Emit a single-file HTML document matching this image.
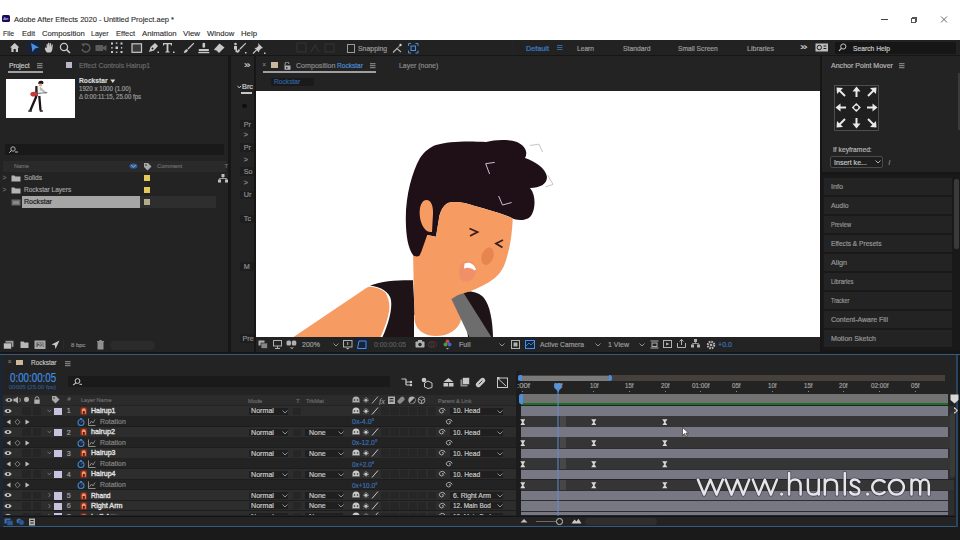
<!DOCTYPE html>
<html><head><meta charset="utf-8">
<style>
*{margin:0;padding:0;box-sizing:border-box}
html,body{width:960px;height:540px;overflow:hidden;background:#161616;font-family:"Liberation Sans",sans-serif;position:relative}
.a{position:absolute}
.t{position:absolute;white-space:nowrap;line-height:1;transform-origin:0 0;-webkit-text-stroke:0.2px currentColor}
</style></head><body>
<div class="a" style="left:0px;top:0px;width:960px;height:39.6px;background:#ffffff;"></div>
<div class="a" style="left:2px;top:15.3px;width:8px;height:7.2px;background:#1b0e4f;border-radius:1.5px;"></div>
<div class="t" style="left:3.3px;top:16.90px;font-size:4.2px;color:#a9a0ff;">Ae</div>
<div class="t" style="left:14px;top:16.05px;font-size:7.3px;color:#2a2a2a;transform:scaleX(1.028);-webkit-text-stroke:0.1px #2a2a2a;">Adobe After Effects 2020 - Untitled Project.aep *</div>
<div class="t" style="left:3.4px;top:30.05px;font-size:7.3px;color:#2a2a2a;transform:scaleX(0.952);-webkit-text-stroke:0.1px #2a2a2a;">File</div>
<div class="t" style="left:22px;top:30.05px;font-size:7.3px;color:#2a2a2a;transform:scaleX(1.033);-webkit-text-stroke:0.1px #2a2a2a;">Edit</div>
<div class="t" style="left:41.6px;top:30.05px;font-size:7.3px;color:#2a2a2a;transform:scaleX(1.055);-webkit-text-stroke:0.1px #2a2a2a;">Composition</div>
<div class="t" style="left:91.4px;top:30.05px;font-size:7.3px;color:#2a2a2a;transform:scaleX(0.964);-webkit-text-stroke:0.1px #2a2a2a;">Layer</div>
<div class="t" style="left:116px;top:30.05px;font-size:7.3px;color:#2a2a2a;transform:scaleX(1.025);-webkit-text-stroke:0.1px #2a2a2a;">Effect</div>
<div class="t" style="left:142px;top:30.05px;font-size:7.3px;color:#2a2a2a;transform:scaleX(1.066);-webkit-text-stroke:0.1px #2a2a2a;">Animation</div>
<div class="t" style="left:183px;top:30.05px;font-size:7.3px;color:#2a2a2a;transform:scaleX(1.083);-webkit-text-stroke:0.1px #2a2a2a;">View</div>
<div class="t" style="left:206.7px;top:30.05px;font-size:7.3px;color:#2a2a2a;transform:scaleX(1.051);-webkit-text-stroke:0.1px #2a2a2a;">Window</div>
<div class="t" style="left:241px;top:30.05px;font-size:7.3px;color:#2a2a2a;transform:scaleX(1.066);-webkit-text-stroke:0.1px #2a2a2a;">Help</div>
<div class="a" style="left:881.4px;top:19px;width:6.6px;height:1px;background:#444;"></div>
<div class="a" style="left:911px;top:18.2px;width:5px;height:4.6px;border:1px solid #555;"></div>
<div class="a" style="left:912.3px;top:17px;width:5px;height:4.6px;border-top:1px solid #555;border-right:1px solid #555;"></div>
<svg class="a" style="left:940px;top:16px;" width="8" height="7" viewBox="0 0 8 7"><path d="M1 0.5 L7 6.5 M7 0.5 L1 6.5" stroke="#555" stroke-width="0.9"/></svg>
<div class="a" style="left:0px;top:39.6px;width:960px;height:15.6px;background:#222222;"></div>
<svg class="a" style="left:9px;top:42px;" width="12" height="11" viewBox="0 0 12 11"><path d="M1 5.5 L5.7 1 L10.4 5.5 L9 5.5 L9 10 L6.8 10 L6.8 7 L4.6 7 L4.6 10 L2.4 10 L2.4 5.5 Z" fill="#c8c8c8"/></svg>
<div class="a" style="left:27px;top:41px;width:13px;height:13px;background:#16233a;"></div>
<svg class="a" style="left:29px;top:42px;" width="11" height="11" viewBox="0 0 11 11"><path d="M2 1 L10 5.5 L6 6.5 L3.5 10 Z" fill="#4a8fe0"/></svg>
<svg class="a" style="left:44px;top:42px;" width="12" height="12" viewBox="0 0 12 12"><path d="M3 10.5 C1.5 9 1 7.5 0.8 6 C1.2 5.3 2 5.5 2.6 6.3 L2.6 2.3 C2.8 1.5 3.6 1.5 3.8 2.3 L3.9 5 L4.1 1.2 C4.3 0.4 5.2 0.4 5.4 1.2 L5.5 5 L5.9 1.6 C6.1 0.9 7 0.9 7.1 1.7 L7 5.3 L7.7 2.8 C8 2.1 8.9 2.3 8.8 3.1 L8.3 7.5 C8 9 7.2 10 6.5 10.5 Z" fill="#c8c8c8"/></svg>
<svg class="a" style="left:59px;top:42px;" width="13" height="12" viewBox="0 0 13 12"><circle cx="5" cy="5" r="3.6" stroke="#c8c8c8" stroke-width="1.3" fill="none"/><path d="M7.6 7.6 L11 11" stroke="#c8c8c8" stroke-width="1.6"/></svg>
<svg class="a" style="left:80px;top:42px;" width="12" height="12" viewBox="0 0 12 12"><path d="M3 3.2 A4 4 0 1 1 2 7" stroke="#5c5c5c" stroke-width="1.4" fill="none"/><path d="M1 1.5 L4.5 1.8 L3.5 5 Z" fill="#5c5c5c"/></svg>
<svg class="a" style="left:95px;top:43px;" width="12" height="10" viewBox="0 0 12 10"><rect x="0.5" y="2" width="7.5" height="6" fill="#5c5c5c"/><path d="M8 4 L11.5 2 L11.5 8 L8 6 Z" fill="#5c5c5c"/></svg>
<svg class="a" style="left:111px;top:42px;" width="12" height="12" viewBox="0 0 12 12"><g fill="#c8c8c8"><rect x="0" y="0.5" width="2" height="2"/><rect x="9.5" y="0.5" width="2" height="2"/><rect x="0" y="9" width="2" height="2"/><rect x="9.5" y="9" width="2" height="2"/><rect x="4.5" y="4.5" width="2.5" height="2.5"/><rect x="4.8" y="0.5" width="1.6" height="1.3"/><rect x="4.8" y="9.6" width="1.6" height="1.3"/><rect x="0.3" y="5" width="1.3" height="1.6"/><rect x="9.9" y="5" width="1.3" height="1.6"/></g></svg>
<svg class="a" style="left:131px;top:43px;" width="12" height="10" viewBox="0 0 12 10"><rect x="1" y="0.8" width="9.5" height="8.5" stroke="#c8c8c8" stroke-width="1.2" fill="#3a3a3a"/></svg>
<svg class="a" style="left:147px;top:42px;" width="13" height="12" viewBox="0 0 13 12"><path d="M2 10 L3.5 5 L8 1 L11 4 L7 8.5 Z" fill="#c8c8c8"/><circle cx="5.5" cy="6.5" r="1" fill="#1f1f1f"/><rect x="10.5" y="9.5" width="1.5" height="1.5" fill="#c8c8c8"/></svg>
<svg class="a" style="left:162px;top:42px;" width="13" height="12" viewBox="0 0 13 12"><path d="M1 1 L10 1 L10 3.5 L9 3.5 L8.6 2.3 L6.4 2.3 L6.4 9.3 L7.6 9.7 L7.6 10.4 L3.4 10.4 L3.4 9.7 L4.6 9.3 L4.6 2.3 L2.4 2.3 L2 3.5 L1 3.5 Z" fill="#c8c8c8"/><rect x="11" y="9.5" width="1.5" height="1.5" fill="#c8c8c8"/></svg>
<svg class="a" style="left:183px;top:42px;" width="12" height="12" viewBox="0 0 12 12"><path d="M10.5 0.8 L11.3 1.6 L5.5 7.5 L4.5 6.5 Z" fill="#c8c8c8"/><path d="M4 7 L5 8 C4.5 10 3 11 0.8 11 C1.2 10 1.2 8 4 7 Z" fill="#c8c8c8"/></svg>
<svg class="a" style="left:198px;top:42px;" width="12" height="12" viewBox="0 0 12 12"><rect x="4.5" y="0.8" width="2.6" height="5" rx="1.2" fill="#c8c8c8"/><path d="M0.8 7 L10.8 7 L10.8 9.2 L0.8 9.2 Z" fill="#c8c8c8"/><rect x="0.3" y="10" width="11" height="1.2" fill="#c8c8c8"/></svg>
<svg class="a" style="left:213px;top:42px;" width="13" height="12" viewBox="0 0 13 12"><path d="M1 7.5 L6.5 1.5 L11.5 5.5 L6 11 Z" fill="#c8c8c8"/><path d="M2.5 8 L5 10.5" stroke="#1f1f1f" stroke-width="1"/></svg>
<svg class="a" style="left:233px;top:42px;" width="14" height="12" viewBox="0 0 14 12"><circle cx="2.5" cy="2" r="1.3" fill="#c8c8c8"/><path d="M1 4 L4 4 L4 10 L2.5 10 L2.3 7 L1 8 Z" fill="#c8c8c8"/><path d="M12.5 0.8 L13.2 1.6 L7.5 7.5 L6.5 6.5 Z" fill="#c8c8c8"/><path d="M6 7 L7 8 C6.5 10 5 11 3.5 11 C4 10 4 8 6 7 Z" fill="#c8c8c8"/><rect x="12" y="10" width="1.5" height="1.5" fill="#c8c8c8"/></svg>
<svg class="a" style="left:252px;top:42px;" width="14" height="13" viewBox="0 0 14 13"><path d="M6 1 L11 6 L9.3 6.5 L7.3 8.5 L7 10.5 L2.5 6 L4.5 5.7 L6.5 3.7 Z" fill="#c8c8c8"/><path d="M4.5 8 L1 11.5" stroke="#c8c8c8" stroke-width="1.2"/><rect x="12" y="10.5" width="1.5" height="1.5" fill="#c8c8c8"/></svg>
<svg class="a" style="left:296px;top:42px;" width="40" height="12" viewBox="0 0 40 12"><rect x="1" y="1" width="9" height="9" stroke="#343434" fill="none"/><path d="M15 10 L19 3 L23 10" stroke="#343434" fill="none" stroke-width="1.2"/><rect x="29" y="2" width="9" height="8" stroke="#343434" fill="none"/></svg>
<div class="a" style="left:347px;top:44px;width:8.4px;height:9px;border:1.2px solid #9a9a9a;"></div>
<div class="t" style="left:357.5px;top:45.30px;font-size:7px;color:#9a9a9a;transform:scaleX(0.987);">Snapping</div>
<svg class="a" style="left:392px;top:43px;" width="11" height="11" viewBox="0 0 11 11"><path d="M1 9.5 L5 5.5 L9 9" stroke="#b8b8b8" stroke-width="1.1" fill="none"/><circle cx="8.5" cy="2" r="1.2" fill="#d8d8d8"/><path d="M5 5.5 L8 2.5" stroke="#b8b8b8" stroke-width="1"/></svg>
<svg class="a" style="left:408px;top:43px;" width="11" height="11" viewBox="0 0 11 11"><g stroke="#4a8fe0" stroke-width="1" fill="none"><path d="M0.5 3 L0.5 0.5 L3 0.5 M7.5 0.5 L10 0.5 L10 3 M10 7.5 L10 10 L7.5 10 M3 10 L0.5 10 L0.5 7.5"/><rect x="3" y="3" width="4.5" height="4.5"/></g></svg>
<div class="a" style="left:512px;top:40px;width:1px;height:14px;background:#242424;"></div>
<div class="t" style="left:526px;top:44.70px;font-size:7px;color:#3d7fc8;transform:scaleX(1.037);">Default</div>
<svg class="a" style="left:557px;top:45px;" width="6" height="5" viewBox="0 0 6 5"><path d="M0 0.5H5.5M0 2.5H5.5M0 4.5H5.5" stroke="#3d6fa8" stroke-width="0.9"/></svg>
<div class="t" style="left:577px;top:44.70px;font-size:7px;color:#9a9a9a;transform:scaleX(0.950);">Learn</div>
<div class="t" style="left:622.5px;top:44.70px;font-size:7px;color:#9a9a9a;transform:scaleX(0.968);">Standard</div>
<div class="t" style="left:678px;top:44.70px;font-size:7px;color:#9a9a9a;transform:scaleX(0.956);">Small Screen</div>
<div class="t" style="left:747px;top:44.70px;font-size:7px;color:#9a9a9a;transform:scaleX(1.006);">Libraries</div>
<div class="t" style="left:799.5px;top:42.50px;font-size:9px;color:#cfcfcf;transform:scaleX(1.498);">»</div>
<svg class="a" style="left:815px;top:43px;" width="14" height="9" viewBox="0 0 14 9"><rect x="0.5" y="0.5" width="12.5" height="8" fill="#bdbdbd"/><circle cx="4.3" cy="4.5" r="2.2" stroke="#1f1f1f" stroke-width="1" fill="none"/><rect x="8.5" y="2.5" width="2.8" height="1" fill="#1f1f1f"/><rect x="8.5" y="5" width="2.8" height="1" fill="#1f1f1f"/></svg>
<div class="a" style="left:835px;top:41.5px;width:121px;height:12.5px;background:#161616;"></div>
<svg class="a" style="left:838px;top:43px;" width="9" height="9" viewBox="0 0 9 9"><circle cx="5.3" cy="3.5" r="2.6" stroke="#c8c8c8" stroke-width="1" fill="none"/><path d="M3.4 5.4 L1 7.8" stroke="#c8c8c8" stroke-width="1.2"/></svg>
<div class="t" style="left:852.8px;top:44.70px;font-size:7.2px;color:#c8c8c8;transform:scaleX(0.934);">Search Help</div>
<div class="a" style="left:0px;top:55px;width:960px;height:485px;background:#161616;"></div>
<div class="a" style="left:0px;top:56px;width:228px;height:295.5px;background:#232323;"></div>
<div class="a" style="left:231px;top:56px;width:23px;height:295.5px;background:#232323;"></div>
<div class="a" style="left:256px;top:56px;width:564px;height:35px;background:#232323;"></div>
<div class="a" style="left:256px;top:336.5px;width:564px;height:15px;background:#232323;"></div>
<div class="a" style="left:822px;top:56px;width:138px;height:116px;background:#232323;"></div>
<div class="t" style="left:8.75px;top:61.90px;font-size:7.2px;color:#c8c8c8;transform:scaleX(0.926);">Project</div>
<svg class="a" style="left:37px;top:63px;" width="6" height="6" viewBox="0 0 6 6"><path d="M0 0.7H5.5M0 2.7H5.5M0 4.7H5.5" stroke="#a0a0a0" stroke-width="0.9"/></svg>
<div class="a" style="left:7.5px;top:71.3px;width:35px;height:1.5px;background:#a0a0a0;"></div>
<div class="a" style="left:65.75px;top:62px;width:6px;height:5.5px;background:#b8b8c8;"></div>
<div class="t" style="left:78.75px;top:61.90px;font-size:7.2px;color:#6a6a6a;transform:scaleX(0.959);">Effect Controls Hairup1</div>
<div class="a" style="left:5.7px;top:79px;width:69.3px;height:39px;background:#ffffff;"></div>
<svg class="a" style="left:5.7px;top:79px" width="69.3" height="39" viewBox="5.7 79 69.3 39"><path d="M38 84 C37.5 81.5 39.5 80.6 41 80.8 C43 81 43.6 82.5 42.8 84 Z" fill="#1c1418"/><rect x="38.6" y="83.6" width="3" height="2.6" fill="#eaa27a"/><path d="M35 86 L40.5 86 L40.8 96 L35 96 Z" fill="#f2f2f2"/><path d="M35 86 L37.2 86 L37.5 96 L34.8 96 Z" fill="#2a2226"/><path d="M39.8 86.5 L46.5 92.8 L46 94 L39.5 90 Z" fill="#bdbdbd"/><ellipse cx="33.7" cy="94.2" rx="3.6" ry="2.4" fill="#c8383a"/><path d="M36 93.5 L47 92.6" stroke="#555" stroke-width="0.8"/><path d="M36.2 96 L30 110.5 M39 96 L40.2 110.5" stroke="#1c1418" stroke-width="2.3"/><path d="M28 111 L31.5 111 M39.5 111 L42.5 111" stroke="#1c1418" stroke-width="1.3"/></svg>
<div class="t" style="left:79px;top:77.45px;font-size:7.5px;color:#d8d8d8;font-weight:700;transform:scaleX(0.888);">Rockstar</div>
<svg class="a" style="left:109.5px;top:79px;" width="6" height="5" viewBox="0 0 6 5"><path d="M0.3 0.5 L5.3 0.5 L2.8 4 Z" fill="#d8d8d8"/></svg>
<div class="t" style="left:79px;top:86.10px;font-size:6.6px;color:#9a9a9a;transform:scaleX(0.935);">1920 x 1000 (1.00)</div>
<div class="t" style="left:79px;top:94.40px;font-size:6.6px;color:#9a9a9a;transform:scaleX(0.923);">Δ 0:00:11:15, 25.00 fps</div>
<div class="a" style="left:5px;top:144px;width:219px;height:11px;background:#191919;"></div>
<svg class="a" style="left:8px;top:146px;" width="12" height="8" viewBox="0 0 12 8"><circle cx="5" cy="3" r="2.2" stroke="#c0c0c0" stroke-width="0.9" fill="none"/><path d="M3.4 4.6 L1.2 6.8" stroke="#c0c0c0" stroke-width="1"/><path d="M7 6 L10 6" stroke="#c0c0c0" stroke-width="1"/></svg>
<div class="a" style="left:3px;top:161px;width:223px;height:10.5px;background:#2a2a2a;"></div>
<div class="t" style="left:14.2px;top:163.30px;font-size:6px;color:#6a6a6a;transform:scaleX(0.925);">Name</div>
<svg class="a" style="left:129px;top:163px;" width="9" height="6" viewBox="0 0 9 6"><ellipse cx="4.5" cy="3" rx="4" ry="2.6" fill="#2f5e9a"/><path d="M2.3 2.3 L4.5 4 L6.7 2.3" stroke="#bcd" stroke-width="0.8" fill="none"/></svg>
<svg class="a" style="left:143px;top:162px;" width="9" height="9" viewBox="0 0 9 9"><path d="M1 1 L5 1 L8.5 4.5 L4.5 8.5 L1 5 Z" fill="#a8a8a8"/><circle cx="3" cy="3" r="0.8" fill="#2a2a2a"/></svg>
<div class="t" style="left:157px;top:163.30px;font-size:6px;color:#6a6a6a;transform:scaleX(0.961);">Comment</div>
<div class="t" style="left:224.5px;top:163.30px;font-size:6px;color:#6a6a6a;">T</div>
<div class="a" style="left:22px;top:196px;width:118px;height:12px;background:#a6a6a6;"></div>
<div class="a" style="left:140px;top:196px;width:76px;height:12px;background:#2e2e2e;"></div>
<div class="t" style="left:2.5px;top:174.75px;font-size:6.5px;color:#6a6a6a;">&gt;</div>
<svg class="a" style="left:11px;top:174.5px;" width="10" height="7" viewBox="0 0 10 7"><path d="M0.5 0.5 L3.5 0.5 L4.3 1.5 L9.5 1.5 L9.5 6.5 L0.5 6.5 Z" fill="#b4b4b4"/></svg>
<div class="t" style="left:23.8px;top:174.35px;font-size:7.3px;color:#a0a0a0;transform:scaleX(0.905);">Solids</div>
<div class="a" style="left:144px;top:175px;width:6px;height:6px;background:#e2c95a;"></div>
<div class="t" style="left:2.5px;top:186.75px;font-size:6.5px;color:#6a6a6a;">&gt;</div>
<svg class="a" style="left:11px;top:186.5px;" width="10" height="7" viewBox="0 0 10 7"><path d="M0.5 0.5 L3.5 0.5 L4.3 1.5 L9.5 1.5 L9.5 6.5 L0.5 6.5 Z" fill="#b4b4b4"/></svg>
<div class="t" style="left:23.8px;top:186.35px;font-size:7.3px;color:#a0a0a0;transform:scaleX(0.895);">Rockstar Layers</div>
<div class="a" style="left:144px;top:187px;width:6px;height:6px;background:#e2c95a;"></div>
<svg class="a" style="left:11px;top:198.5px;" width="10" height="7" viewBox="0 0 10 7"><rect x="0.5" y="0.5" width="9" height="6" fill="#6a6a6a"/><rect x="2" y="2" width="6" height="3.2" fill="#888"/></svg>
<div class="t" style="left:23.8px;top:198.35px;font-size:7.3px;color:#1a1a1a;transform:scaleX(0.972);">Rockstar</div>
<div class="a" style="left:144px;top:199px;width:6px;height:6px;background:#b0ad88;"></div>
<svg class="a" style="left:218px;top:174px;" width="10" height="9" viewBox="0 0 10 9"><g fill="#c0c0c0"><rect x="3.5" y="0" width="3" height="3"/><rect x="0" y="5.5" width="3" height="3"/><rect x="7" y="5.5" width="3" height="3"/><path d="M5 3 L5 4.5 M1.5 5.5 L1.5 4.5 L8.5 4.5 L8.5 5.5" stroke="#c0c0c0" stroke-width="0.8" fill="none"/></g></svg>
<svg class="a" style="left:3px;top:340px;" width="11" height="10" viewBox="0 0 11 10"><rect x="2.5" y="0.8" width="8" height="6" fill="#9a9a9a"/><rect x="0.5" y="3" width="8" height="6" fill="#c0c0c0" stroke="#232323" stroke-width="0.6"/></svg>
<svg class="a" style="left:20px;top:341px;" width="9" height="8" viewBox="0 0 9 8"><path d="M0.5 0.5 L3.5 0.5 L4.3 1.5 L8.5 1.5 L8.5 7 L0.5 7 Z" fill="#b8b8b8"/></svg>
<svg class="a" style="left:33.5px;top:340px;" width="12" height="10" viewBox="0 0 12 10"><rect x="0.5" y="0.5" width="11" height="8.5" fill="#a8a8a8"/><rect x="2.5" y="2.5" width="7" height="4.5" fill="#555"/><text x="3.5" y="6.5" font-size="5" fill="#ddd" font-family="Liberation Sans">20</text></svg>
<svg class="a" style="left:51px;top:340px;" width="9" height="10" viewBox="0 0 9 10"><path d="M8.5 0.5 L0.5 4.5 L3.8 5.2 L4.5 9 Z" fill="#c8c8c8"/></svg>
<div class="a" style="left:63px;top:340px;width:1px;height:9px;background:#2c2c2c;"></div>
<div class="t" style="left:70.5px;top:342.40px;font-size:6.2px;color:#8a8a8a;transform:scaleX(0.956);">8 bpc</div>
<svg class="a" style="left:97px;top:340px;" width="7" height="10" viewBox="0 0 7 10"><rect x="0.5" y="2" width="6" height="7.5" fill="#909090"/><rect x="0" y="1" width="7" height="1" fill="#909090"/><rect x="2.3" y="0" width="2.4" height="1" fill="#909090"/></svg>
<div class="a" style="left:110px;top:340.5px;width:45px;height:9.5px;background:#2b2b2b;border-radius:5px;"></div>
<div class="t" style="left:243.5px;top:60.70px;font-size:9px;color:#d0d0d0;transform:scaleX(1.299);">»</div>
<svg class="a" style="left:237px;top:84.5px;" width="5" height="4" viewBox="0 0 5 4"><path d="M0.5 0.8 L2.3 3 L4.1 0.8" stroke="#d0d0d0" stroke-width="0.9" fill="none"/></svg>
<div class="t" style="left:241.5px;top:83.15px;font-size:7.3px;color:#d0d0d0;transform:scaleX(1.005);">Brc</div>
<div class="a" style="left:241px;top:92.3px;width:11px;height:1.5px;background:#c8c8c8;"></div>
<div class="a" style="left:242.2px;top:103.8px;width:4.4px;height:4.4px;background:#0e0e0e;border-radius:50%;"></div>
<div class="a" style="left:240px;top:120.0px;width:14px;height:8.6px;background:#1d1d1d;"></div>
<div class="t" style="left:243.8px;top:120.70px;font-size:7.2px;color:#8e8e8e;">Pr</div>
<div class="t" style="left:243.8px;top:131.40px;font-size:7.2px;color:#8e8e8e;">&gt;</div>
<div class="a" style="left:240px;top:143.29999999999998px;width:14px;height:8.6px;background:#1d1d1d;"></div>
<div class="t" style="left:243.8px;top:144.00px;font-size:7.2px;color:#8e8e8e;">Pr</div>
<div class="t" style="left:243.8px;top:155.80px;font-size:7.2px;color:#8e8e8e;">&gt;</div>
<div class="a" style="left:240px;top:167.0px;width:14px;height:8.6px;background:#1d1d1d;"></div>
<div class="t" style="left:243.8px;top:167.70px;font-size:7.2px;color:#8e8e8e;">So</div>
<div class="t" style="left:243.8px;top:179.40px;font-size:7.2px;color:#8e8e8e;">&gt;</div>
<div class="a" style="left:240px;top:190.7px;width:14px;height:8.6px;background:#1d1d1d;"></div>
<div class="t" style="left:243.8px;top:191.40px;font-size:7.2px;color:#8e8e8e;">Ur</div>
<div class="a" style="left:240px;top:214.7px;width:14px;height:8.6px;background:#1d1d1d;"></div>
<div class="t" style="left:243.8px;top:215.40px;font-size:7.2px;color:#8e8e8e;">Tc</div>
<div class="a" style="left:240px;top:262.2px;width:14px;height:8.6px;background:#1d1d1d;"></div>
<div class="t" style="left:243.8px;top:262.90px;font-size:7.2px;color:#8e8e8e;">M</div>
<div class="a" style="left:240px;top:334.0px;width:14px;height:8.6px;background:#1d1d1d;"></div>
<div class="t" style="left:242.5px;top:334.70px;font-size:7.2px;color:#8e8e8e;">Pre</div>
<div class="t" style="left:262.3px;top:62.25px;font-size:6.5px;color:#7a7a7a;">×</div>
<div class="a" style="left:271px;top:62px;width:6.5px;height:6px;background:#c9b99a;"></div>
<svg class="a" style="left:284px;top:61.5px;" width="7" height="8" viewBox="0 0 7 8"><path d="M1 3.5 L1 2 A2 2 0 0 1 5 2" stroke="#b0b0b0" stroke-width="0.9" fill="none"/><rect x="0.5" y="3.5" width="6" height="4.3" fill="#b0b0b0"/><rect x="2.2" y="5" width="1.2" height="1.8" fill="#232323"/></svg>
<div class="t" style="left:295.5px;top:61.90px;font-size:7.2px;color:#8a8a8a;transform:scaleX(0.987);">Composition</div>
<div class="t" style="left:337px;top:61.90px;font-size:7.2px;color:#4a8cd8;transform:scaleX(0.915);">Rockstar</div>
<svg class="a" style="left:370px;top:63px;" width="6" height="6" viewBox="0 0 6 6"><path d="M0 0.7H5.5M0 2.7H5.5M0 4.7H5.5" stroke="#a0a0a0" stroke-width="0.9"/></svg>
<div class="a" style="left:262.5px;top:71.3px;width:113px;height:1.5px;background:#a0a0a0;"></div>
<div class="t" style="left:398.75px;top:61.90px;font-size:7.2px;color:#8a8a8a;transform:scaleX(0.963);">Layer  (none)</div>
<div class="a" style="left:270.5px;top:77.5px;width:43px;height:8.5px;background:#1a1a1a;"></div>
<div class="t" style="left:273.75px;top:78.20px;font-size:7px;color:#3062a0;transform:scaleX(0.950);">Rockstar</div>
<div class="a" style="left:256px;top:91px;width:564px;height:245.5px;background:#ffffff;"></div>
<div class="t" style="left:831px;top:61.80px;font-size:7.2px;color:#b4b4b4;transform:scaleX(0.981);">Anchor Point Mover</div>
<svg class="a" style="left:899px;top:63px;" width="6" height="6" viewBox="0 0 6 6"><path d="M0 0.7H5.5M0 2.7H5.5M0 4.7H5.5" stroke="#a0a0a0" stroke-width="0.9"/></svg>
<div class="a" style="left:957.8px;top:73px;width:2.2px;height:57px;background:#3a3a3a;"></div>
<div class="a" style="left:834.4px;top:85px;width:45px;height:45.5px;border:1px solid #4e4e4e;background:#1f1f1f;"></div>
<svg class="a" style="left:834.4px;top:85px;" width="45" height="45.5" viewBox="0 0 45 45.5"><g fill="none" stroke="#e8e8e8" stroke-width="2" stroke-linecap="butt"><path d="M4 4 L11 11"/><path d="M22.5 3 L22.5 12"/><path d="M41 4 L34 11"/><path d="M3 22.5 L12 22.5"/><path d="M33 22.5 L42 22.5"/><path d="M4 41 L11 34"/><path d="M22.5 33 L22.5 42"/><path d="M41 41 L34 34"/><path d="M22.3 18 L26.8 22.5 L22.3 27 L17.8 22.5 Z" fill="#e8e8e8" stroke="none"/><circle cx="22.3" cy="22.5" r="2.1" fill="#1f1f1f" stroke="none"/></g><g fill="#e8e8e8"><path d="M2.5 2.5 L9 3 L3 9 Z"/><path d="M22.5 1.5 L26.5 6.5 L18.5 6.5 Z"/><path d="M42.5 2.5 L42 9 L36 3 Z"/><path d="M1.5 22.5 L6.5 18.5 L6.5 26.5 Z"/><path d="M43.5 22.5 L38.5 18.5 L38.5 26.5 Z"/><path d="M2.5 42.5 L3 36 L9 42 Z"/><path d="M22.5 43.5 L18.5 38.5 L26.5 38.5 Z"/><path d="M42.5 42.5 L36 42 L42 36 Z"/></g></svg>
<div class="t" style="left:832.7px;top:145.80px;font-size:7.2px;color:#b4b4b4;transform:scaleX(0.932);">If keyframed:</div>
<div class="a" style="left:830px;top:156px;width:53px;height:12px;background:#1e1e1e;border:1px solid #4a4a4a;border-radius:2px;"></div>
<div class="t" style="left:833.8px;top:158.70px;font-size:7.2px;color:#c0c0c0;transform:scaleX(0.982);">Insert ke...</div>
<svg class="a" style="left:875px;top:160px;" width="6" height="4" viewBox="0 0 6 4"><path d="M0.5 0.5 L3 3 L5.5 0.5" stroke="#c0c0c0" stroke-width="0.9" fill="none"/></svg>
<div class="t" style="left:888.5px;top:158.50px;font-size:7px;color:#8a8a8a;font-style:italic;">i</div>
<div class="a" style="left:822px;top:174px;width:138px;height:178px;background:#191919;"></div>
<div class="a" style="left:823.7px;top:178px;width:128.8px;height:17px;background:#232323;"></div>
<div class="t" style="left:831px;top:183.20px;font-size:7.2px;color:#969696;transform:scaleX(0.999);">Info</div>
<div class="a" style="left:823.7px;top:197px;width:128.8px;height:17px;background:#232323;"></div>
<div class="t" style="left:831px;top:202.20px;font-size:7.2px;color:#969696;transform:scaleX(0.950);">Audio</div>
<div class="a" style="left:823.7px;top:216px;width:128.8px;height:17px;background:#232323;"></div>
<div class="t" style="left:831px;top:221.20px;font-size:7.2px;color:#969696;transform:scaleX(0.781);">Preview</div>
<div class="a" style="left:823.7px;top:235px;width:128.8px;height:17px;background:#232323;"></div>
<div class="t" style="left:831px;top:240.20px;font-size:7.2px;color:#969696;transform:scaleX(0.917);">Effects &amp; Presets</div>
<div class="a" style="left:823.7px;top:254px;width:128.8px;height:17px;background:#232323;"></div>
<div class="t" style="left:831px;top:259.20px;font-size:7.2px;color:#969696;transform:scaleX(0.999);">Align</div>
<div class="a" style="left:823.7px;top:273px;width:128.8px;height:17px;background:#232323;"></div>
<div class="t" style="left:831px;top:278.20px;font-size:7.2px;color:#969696;transform:scaleX(0.815);">Libraries</div>
<div class="a" style="left:823.7px;top:292px;width:128.8px;height:17px;background:#232323;"></div>
<div class="t" style="left:831px;top:297.20px;font-size:7.2px;color:#969696;transform:scaleX(0.766);">Tracker</div>
<div class="a" style="left:823.7px;top:311px;width:128.8px;height:17px;background:#232323;"></div>
<div class="t" style="left:831px;top:316.20px;font-size:7.2px;color:#969696;transform:scaleX(0.965);">Content-Aware Fill</div>
<div class="a" style="left:823.7px;top:330px;width:128.8px;height:17px;background:#232323;"></div>
<div class="t" style="left:831px;top:335.20px;font-size:7.2px;color:#969696;transform:scaleX(0.986);">Motion Sketch</div>
<div class="a" style="left:953.7px;top:179px;width:5.3px;height:70px;background:#3a3a3a;border-radius:2px;"></div>
<div class="a" style="left:822px;top:350px;width:138px;height:2px;background:#161616;"></div>
<svg class="a" style="left:256px;top:91px" width="564" height="245.5" viewBox="256 91 564 245.5"><path d="M293.5 337 L367 287.6 C371 285.5 376 284.8 380 286.5 C386 290 389.8 300 389.8 311 C389.6 320 387 330 384 337 Z" fill="#f69b62"/><path d="M368 286.5 C380 281 396 279.5 413 280 L416 337 L380.5 337 C386 325 391 310 389.5 300 C388 292 380 287 368 286.5 Z" fill="#fdfdfd"/><path d="M370 285.6 C382 281 397 280 413 280.2 L416 337 L382.5 337 C388 325 392.5 310 391 300 C389.5 292 381 287 370 285.6 Z" fill="#1e1418"/><path d="M414 315 L470 315 L472 337 L414 337 Z" fill="#fdfdfd"/><path d="M413 250 L458 250 L462 300 L461.5 318 C459 330 448 336 436 336 C424 336 416 330 414.5 320 Z" fill="#f69b62"/><path d="M462 292.5 C470 290 479 292 484 298 C490 306 492.5 320 493 337 L468 337 Z" fill="#1e1418"/><path d="M451.4 298.9 L463 291.9 L491.3 337 L469.4 337 Z" fill="#6d6d6d"/><path d="M436 145 C448 141 470 141 486 142 C495 140 506 139 517 142 C526 146 528 153 525 158 C534 161 546 168 547 177 C547 184 540 188 530 188 C537 196 535 212 530 217 C524 222 514 220 510 217 C500 213 486 209 474 205.7 C466 203 455 201 448.6 202.8 C443 205 440 212 439 218.3 L436 236.8 L427.2 234.9 L425 252 C421 256 416 258 413 255 C408 248 406 236 405.8 220 C405.5 196 412 172 420 158 C425 151 430 147 436 145 Z" fill="#1e1016"/><path d="M448.6 202.8 C455 201 466 203 474 205.7 C486 209 500 213 512.8 218.3 C512 235 510 250 504 266 C499 276 492 281 482 286 C472 291 462 294 452 296.6 L430 296 C420 292 414 288 413.6 280.6 C415 270 418 258 421.4 251.4 L427.2 234.9 L436 236.8 L439 218.3 C440 212 443 205 448.6 202.8 Z" fill="#f69b62"/><path d="M432 232 C426 233 421 226 419.8 216 C419 206 422 200 426.5 200 C431 200 433.5 206 433 214 Z" fill="#f69b62"/><ellipse cx="487.5" cy="256.3" rx="5.8" ry="9" fill="#e7854f" transform="rotate(20 487.5 256.3)"/><path d="M464 262 C470 259 476 263 476 270 C475.5 278 470 282 465 281.6 C460 281 458.5 275 459.5 269 C460 265 461.5 263 464 262 Z" fill="#ef9068"/><path d="M464.5 263.5 C469 261.5 474 263 476 269.5 L474.5 270.5 C471 267.5 467 267 464 268.5 Z" fill="#ffffff"/><path d="M469.5 228.5 L477.5 232 L470 236" stroke="#3a1e1e" stroke-width="1.8" fill="none" stroke-linejoin="miter"/><path d="M503 240 L496 243.5 L502.5 247.5" stroke="#3a1e1e" stroke-width="1.8" fill="none"/><g stroke="#c4c4cc" stroke-width="1" fill="none"><path d="M494.7 162.4 L485.7 163.7 L489.6 174"/><path d="M529.7 145.5 L538.8 144.2 L542.7 152"/><path d="M498.6 196 L502.5 205 L511.6 202.5"/><path d="M547.8 175.3 L553 184.4 L545.3 187"/></g></svg>
<svg class="a" style="left:258px;top:339.8px;" width="10" height="9" viewBox="0 0 10 9"><rect x="0.5" y="0.5" width="6" height="5" fill="#b0b0b0"/><rect x="3" y="3" width="6.5" height="5.5" fill="#888" stroke="#232323" stroke-width="0.7"/></svg>
<svg class="a" style="left:272.5px;top:339.8px;" width="9" height="9" viewBox="0 0 9 9"><rect x="0.5" y="0.5" width="8" height="5.5" stroke="#b0b0b0" fill="none" stroke-width="1"/><path d="M4.5 6 V8 M2 8.5 H7" stroke="#b0b0b0" stroke-width="1"/></svg>
<svg class="a" style="left:285.5px;top:339.8px;" width="11" height="10" viewBox="0 0 11 10"><rect x="0.5" y="0.5" width="4.5" height="5" rx="1.5" fill="#b0b0b0"/><rect x="5.8" y="0.5" width="4.5" height="5" rx="1.5" fill="#b0b0b0"/><path d="M3.5 7.5 L6 9 L8 7.5" fill="#b0b0b0"/></svg>
<div class="t" style="left:302px;top:340.90px;font-size:7.2px;color:#9a9a9a;transform:scaleX(0.977);">200%</div>
<svg class="a" style="left:332.5px;top:342.8px;" width="6" height="4" viewBox="0 0 6 4"><path d="M0.5 0.5 L3 3 L5.5 0.5" stroke="#a0a0a0" stroke-width="0.9" fill="none"/></svg>
<svg class="a" style="left:343px;top:339.8px;" width="10" height="10" viewBox="0 0 10 10"><rect x="0.5" y="0.5" width="8.5" height="6.5" stroke="#b0b0b0" fill="none" stroke-width="1"/><path d="M4.7 2 V5" stroke="#b0b0b0"/><path d="M3 8 L4.7 9.5 L6.5 8" fill="#b0b0b0"/></svg>
<div class="a" style="left:356px;top:338px;width:12px;height:12px;background:#16233a;"></div>
<svg class="a" style="left:357px;top:339.8px;" width="10" height="10" viewBox="0 0 10 10"><path d="M2 1 L9 1 L9 8.5 L0.5 8.5 Z" stroke="#4a8fe0" stroke-width="1" fill="none"/></svg>
<div class="t" style="left:374px;top:341.00px;font-size:7px;color:#5c5c5c;transform:scaleX(0.967);">0:00:00:05</div>
<svg class="a" style="left:414.5px;top:340.3px;" width="10" height="8" viewBox="0 0 10 8"><rect x="0.5" y="1.5" width="9" height="6" rx="0.8" fill="#b0b0b0"/><rect x="3" y="0" width="4" height="2" fill="#b0b0b0"/><circle cx="5" cy="4.5" r="1.7" fill="#232323"/></svg>
<svg class="a" style="left:428px;top:340.3px;" width="9" height="9" viewBox="0 0 9 9"><circle cx="3.2" cy="4.5" r="2.8" stroke="#444" fill="none" stroke-width="1"/><circle cx="5.8" cy="4.5" r="2.8" stroke="#5a2a2a" fill="none" stroke-width="1"/></svg>
<svg class="a" style="left:442.5px;top:339.3px;" width="9" height="11" viewBox="0 0 9 11"><circle cx="4.5" cy="2.5" r="2" fill="#d04040"/><circle cx="2.5" cy="5.5" r="2" fill="#40a040"/><circle cx="6.5" cy="5.5" r="2" fill="#4060d0"/><path d="M3 9 L4.5 10.5 L6 9" fill="#aaa"/></svg>
<div class="t" style="left:458.5px;top:340.90px;font-size:7.2px;color:#9a9a9a;transform:scaleX(0.991);">Full</div>
<svg class="a" style="left:499px;top:342.8px;" width="6" height="4" viewBox="0 0 6 4"><path d="M0.5 0.5 L3 3 L5.5 0.5" stroke="#a0a0a0" stroke-width="0.9" fill="none"/></svg>
<svg class="a" style="left:511px;top:339.8px;" width="9" height="9" viewBox="0 0 9 9"><rect x="0.5" y="0.5" width="8" height="8" stroke="#b0b0b0" fill="none" stroke-width="1"/><rect x="2.5" y="2.5" width="4" height="4" fill="#b0b0b0"/></svg>
<div class="a" style="left:523.5px;top:338px;width:11.5px;height:12px;background:#16233a;"></div>
<svg class="a" style="left:524.5px;top:339.8px;" width="10" height="9" viewBox="0 0 10 9"><rect x="0.5" y="0.5" width="9" height="8" stroke="#4a8fe0" fill="none" stroke-width="1"/><path d="M1 6 L4 3 L6 5 L9 2" stroke="#4a8fe0" fill="none" stroke-width="0.8"/></svg>
<div class="t" style="left:540px;top:340.90px;font-size:7.2px;color:#9a9a9a;transform:scaleX(0.932);">Active Camera</div>
<svg class="a" style="left:594.5px;top:342.8px;" width="6" height="4" viewBox="0 0 6 4"><path d="M0.5 0.5 L3 3 L5.5 0.5" stroke="#a0a0a0" stroke-width="0.9" fill="none"/></svg>
<div class="t" style="left:608px;top:340.90px;font-size:7.2px;color:#9a9a9a;transform:scaleX(0.978);">1 View</div>
<svg class="a" style="left:638.5px;top:342.8px;" width="6" height="4" viewBox="0 0 6 4"><path d="M0.5 0.5 L3 3 L5.5 0.5" stroke="#a0a0a0" stroke-width="0.9" fill="none"/></svg>
<svg class="a" style="left:649.5px;top:339.8px;" width="9" height="9" viewBox="0 0 9 9"><path d="M0.5 1 H8.5 M0.5 8 H8.5" stroke="#b0b0b0"/><rect x="2" y="3" width="5" height="3.5" stroke="#b0b0b0" fill="none"/></svg>
<svg class="a" style="left:663px;top:339.8px;" width="9" height="9" viewBox="0 0 9 9"><rect x="0.5" y="0.5" width="8" height="7" stroke="#b0b0b0" fill="none"/><path d="M3 2.5 L6.5 4 L3 5.5 Z" fill="#b0b0b0"/></svg>
<svg class="a" style="left:677px;top:339.3px;" width="9" height="9" viewBox="0 0 9 9"><path d="M0.5 4 V8.5 H8.5 V4" stroke="#b0b0b0" fill="none"/><path d="M4.5 0.5 V6 M2.5 2.5 L4.5 0.5 L6.5 2.5" stroke="#b0b0b0" fill="none"/></svg>
<svg class="a" style="left:690.7px;top:339.3px;" width="9" height="9" viewBox="0 0 9 9"><rect x="3" y="0" width="3" height="3" fill="#b0b0b0"/><rect x="0" y="5.5" width="3" height="3" fill="#b0b0b0"/><rect x="6" y="5.5" width="3" height="3" fill="#b0b0b0"/><path d="M4.5 3 V4.5 M1.5 5.5 V4.5 H7.5 V5.5" stroke="#b0b0b0" fill="none" stroke-width="0.8"/></svg>
<svg class="a" style="left:705.5px;top:339.8px;" width="10" height="10" viewBox="0 0 10 10"><circle cx="5" cy="5" r="3.2" stroke="#b0b0b0" stroke-width="2.2" fill="none" stroke-dasharray="1.6 0.9"/><circle cx="5" cy="5" r="1.3" fill="#b0b0b0"/></svg>
<div class="t" style="left:718px;top:341.00px;font-size:7px;color:#3a72b8;transform:scaleX(1.013);">+0.0</div>
<div class="a" style="left:820px;top:56px;width:2px;height:296px;background:#161616;"></div>
<div class="a" style="left:0px;top:353.8px;width:960px;height:1.2px;background:#365b80;"></div>
<div class="a" style="left:0px;top:354.8px;width:960px;height:172px;background:#232323;"></div>
<div class="a" style="left:0px;top:526px;width:960px;height:1.2px;background:#365b80;"></div>
<div class="a" style="left:0px;top:354.8px;width:3px;height:172px;background:#1c2633;"></div>
<div class="a" style="left:956px;top:354.8px;width:1.5px;height:172px;background:#2a4560;"></div>
<div class="a" style="left:958px;top:354.8px;width:2px;height:172px;background:#161616;"></div>
<div class="a" style="left:0px;top:527.3px;width:960px;height:13px;background:#1a1a1a;"></div>
<div class="t" style="left:7.8px;top:359.25px;font-size:6.5px;color:#7a7a7a;">×</div>
<div class="a" style="left:16px;top:359.5px;width:7px;height:5.8px;background:#c9b99a;"></div>
<div class="t" style="left:30.5px;top:359.40px;font-size:7.2px;color:#c0c0c0;transform:scaleX(0.898);">Rockstar</div>
<svg class="a" style="left:64.5px;top:360.5px;" width="6" height="6" viewBox="0 0 6 6"><path d="M0 0.7H5.5M0 2.7H5.5M0 4.7H5.5" stroke="#a0a0a0" stroke-width="0.9"/></svg>
<div class="t" style="left:9.8px;top:372.10px;font-size:12.2px;color:#3d8ee0;transform:scaleX(0.801);">0:00:00:05</div>
<div class="t" style="left:9px;top:385.40px;font-size:5.6px;color:#2a5688;transform:scaleX(1.071);">00005 (25.00 fps)</div>
<div class="a" style="left:67.5px;top:376px;width:322.5px;height:10.5px;background:#1a1a1a;"></div>
<svg class="a" style="left:72px;top:377.5px;" width="11" height="8" viewBox="0 0 11 8"><circle cx="5.5" cy="3" r="2.4" stroke="#d0d0d0" stroke-width="1" fill="none"/><path d="M3.8 4.8 L1.2 7.2" stroke="#d0d0d0" stroke-width="1.1"/><path d="M7.5 6.3 L10 6.3" stroke="#d0d0d0" stroke-width="1"/></svg>
<svg class="a" style="left:400.5px;top:377px;" width="12" height="10" viewBox="0 0 12 10"><path d="M0.5 2 H5 M5 2 V8 M5 5 H9 M5 8 H9" stroke="#c8c8c8" stroke-width="1.2" fill="none"/><circle cx="10" cy="5" r="1.2" fill="#c8c8c8"/><circle cx="10" cy="8" r="1.2" fill="#c8c8c8"/></svg>
<svg class="a" style="left:421px;top:376.5px;" width="12" height="12" viewBox="0 0 12 12"><circle cx="3" cy="3" r="2.3" fill="#c8c8c8"/><path d="M7 4 L11 6 L11 10.5 L7 11.5 L3.5 10 L3.5 6 Z" stroke="#c8c8c8" fill="none" stroke-width="1"/></svg>
<svg class="a" style="left:442.5px;top:377px;" width="11" height="10" viewBox="0 0 11 10"><path d="M0.5 5 L5.5 1 L10.5 5 Z" fill="#c8c8c8"/><rect x="0.5" y="6" width="10" height="3.5" fill="#c8c8c8"/><path d="M5.5 5 V9.5" stroke="#232323" stroke-width="0.8"/></svg>
<svg class="a" style="left:459.5px;top:377px;" width="10" height="10" viewBox="0 0 10 10"><rect x="0.5" y="2.5" width="7" height="7" fill="#909090"/><rect x="2.5" y="0.5" width="7" height="7" fill="#c8c8c8" stroke="#232323" stroke-width="0.6"/></svg>
<svg class="a" style="left:475px;top:376.5px;" width="11" height="11" viewBox="0 0 11 11"><g transform="rotate(-45 5.5 5.5)"><rect x="0" y="3" width="11" height="5" rx="2.5" fill="#c8c8c8"/><path d="M3 5.5 H8" stroke="#232323" stroke-width="0.8"/></g></svg>
<svg class="a" style="left:496.5px;top:376.5px;" width="11" height="11" viewBox="0 0 11 11"><rect x="0.5" y="1" width="10" height="9.5" stroke="#c8c8c8" fill="none" stroke-width="1"/><path d="M2 2.5 L9 9" stroke="#c8c8c8" stroke-width="1"/><rect x="0" y="0" width="2.5" height="2.5" fill="#c8c8c8"/></svg>
<div class="a" style="left:3px;top:394.5px;width:512.5px;height:10.3px;background:#2b2b2b;"></div>
<svg class="a" style="left:4.5px;top:396.5px;" width="8" height="6" viewBox="0 0 8 6"><path d="M0.3 3 C2 0.3 6 0.3 7.7 3 C6 5.7 2 5.7 0.3 3 Z" fill="#b0b0b0"/><circle cx="4" cy="3" r="1.2" fill="#2b2b2b"/></svg>
<svg class="a" style="left:13px;top:395.8px;" width="9" height="8" viewBox="0 0 9 8"><path d="M0.5 2.5 H2.5 L5 0.5 V7.5 L2.5 5.5 H0.5 Z" fill="#b0b0b0"/><path d="M6.5 2 C7.5 3 7.5 5 6.5 6" stroke="#b0b0b0" fill="none" stroke-width="0.8"/></svg>
<div class="a" style="left:24.2px;top:397.3px;width:4.6px;height:4.6px;background:#b0b0b0;border-radius:50%;"></div>
<svg class="a" style="left:34px;top:395.5px;" width="6" height="8" viewBox="0 0 6 8"><path d="M1.2 3.5 V2.5 A1.8 1.8 0 0 1 4.8 2.5 V3.5" stroke="#b0b0b0" fill="none" stroke-width="0.9"/><rect x="0.3" y="3.5" width="5.4" height="4.3" fill="#b0b0b0"/></svg>
<svg class="a" style="left:51px;top:395px;" width="9" height="9" viewBox="0 0 9 9"><path d="M1 1 L5 1 L8.5 4.5 L4.5 8.5 L1 5 Z" fill="#a8a8a8"/><circle cx="3" cy="3" r="0.8" fill="#2b2b2b"/></svg>
<div class="t" style="left:67.5px;top:397.25px;font-size:5.5px;color:#6a6a6a;">#</div>
<div class="t" style="left:80.5px;top:397.20px;font-size:6px;color:#6a6a6a;transform:scaleX(0.933);">Layer Name</div>
<div class="t" style="left:247.7px;top:397.60px;font-size:6px;color:#6a6a6a;transform:scaleX(0.953);">Mode</div>
<div class="t" style="left:296px;top:397.60px;font-size:6px;color:#6a6a6a;">T</div>
<div class="t" style="left:306px;top:397.60px;font-size:6px;color:#6a6a6a;transform:scaleX(0.976);">TrkMat</div>
<svg class="a" style="left:352px;top:396px;" width="74" height="9" viewBox="0 0 74 9"><path d="M0.5 7 V4 A3.5 3.5 0 0 1 7.5 4 V7 Z" fill="#b0b0b0"/><path d="M0.5 6.5 H7.5" stroke="#2b2b2b" stroke-width="0.6"/><circle cx="2.5" cy="4" r="0.8" fill="#2b2b2b"/><circle cx="5.5" cy="4" r="0.8" fill="#2b2b2b"/><circle cx="14" cy="4.2" r="1.6" fill="#b0b0b0"/><path d="M14 1.2 V2 M14 6.4 V7.2 M11 4.2 H11.8 M16.2 4.2 H17 M11.9 2.1 L12.5 2.7 M15.5 5.7 L16.1 6.3 M16.1 2.1 L15.5 2.7 M12.5 5.7 L11.9 6.3" stroke="#b0b0b0" stroke-width="0.8"/><path d="M20 7.5 L26 0.5" stroke="#b0b0b0" stroke-width="1"/><text x="27" y="7.5" font-size="8" font-style="italic" font-family="Liberation Serif" fill="#b0b0b0">fx</text><rect x="36" y="0.5" width="7" height="7.5" fill="#b0b0b0"/><rect x="37.5" y="2" width="4" height="1.2" fill="#2b2b2b"/><rect x="37.5" y="4.5" width="4" height="1.2" fill="#2b2b2b"/><g transform="rotate(-45 49 4.2)"><rect x="45" y="2" width="8" height="4.5" rx="2.2" fill="#8a8a8a"/></g><circle cx="60" cy="4.2" r="3.6" fill="#b0b0b0"/><path d="M57.5 6.7 L62.5 1.7 A3.6 3.6 0 0 1 57.5 6.7 Z" fill="#2b2b2b"/><circle cx="69.5" cy="4.2" r="3.4" stroke="#b0b0b0" fill="none" stroke-width="0.9"/><path d="M66.5 3 L69.5 4.5 L72.5 3 M69.5 4.5 V7.5" stroke="#b0b0b0" fill="none" stroke-width="0.8"/></svg>
<div class="t" style="left:437.5px;top:397.70px;font-size:6px;color:#6a6a6a;transform:scaleX(0.930);">Parent &amp; Link</div>
<div class="a" style="left:0;top:405.8px;width:960px;height:109.7px;overflow:hidden">
<div class="a" style="left:3px;top:0.0px;width:512.5px;height:9.93px;background:#2d2d2d;"></div>
<div class="a" style="left:3px;top:9.93px;width:512.5px;height:0.6px;background:#1d1d1d;"></div>
<svg class="a" style="left:4px;top:2.2649999999999997px;" width="8" height="6" viewBox="0 0 8 6"><path d="M0.3 3 C2 0.3 6 0.3 7.7 3 C6 5.7 2 5.7 0.3 3 Z" fill="#c8c8c8"/><circle cx="4" cy="3" r="1.2" fill="#2d2d2d"/></svg>
<div class="a" style="left:21.7px;top:1.5px;width:9px;height:7.529999999999999px;background:#252525;"></div>
<div class="a" style="left:32.5px;top:1.5px;width:8px;height:7.529999999999999px;background:#252525;"></div>
<svg class="a" style="left:47.3px;top:3.2649999999999997px;" width="5" height="4" viewBox="0 0 5 4"><path d="M0.6 0.8 L2.4 2.8 L4.2 0.8" stroke="#7a7a7a" stroke-width="0.9" fill="none"/></svg>
<div class="a" style="left:54px;top:2.3px;width:7.7px;height:7.2px;background:#c6c2e0;"></div>
<div class="t" style="left:66.7px;top:1.66px;font-size:7.2px;color:#a0a0a0;">1</div>
<svg class="a" style="left:79.5px;top:1.5px;" width="7.5" height="8" viewBox="0 0 7.5 8"><rect x="0.3" y="0.3" width="7" height="7.4" rx="1.5" fill="#8e2c16"/><path d="M1.8 6.8 V3.2 A2 2 0 0 1 5.8 3.2 V6.8 Z" fill="#e89a70"/><rect x="2.8" y="4" width="2" height="2.8" fill="#6a1606"/></svg>
<div class="t" style="left:91.3px;top:1.51px;font-size:7.5px;color:#e0e0e0;transform:scaleX(0.933);-webkit-text-stroke:0.35px #e0e0e0;">Hairup1</div>
<div class="a" style="left:248.6px;top:1.8px;width:39.8px;height:7.129999999999999px;background:#1f1f1f;"></div>
<div class="t" style="left:251px;top:1.66px;font-size:7.2px;color:#c8c8c8;transform:scaleX(0.991);">Normal</div>
<svg class="a" style="left:282px;top:3.7649999999999997px;" width="6" height="4" viewBox="0 0 6 4"><path d="M0.5 0.5 L3 3 L5.5 0.5" stroke="#9a9a9a" stroke-width="0.9" fill="none"/></svg>
<div class="a" style="left:293px;top:1.8px;width:8px;height:7.129999999999999px;background:#262626;"></div>
<svg class="a" style="left:352px;top:1.2px;" width="27" height="9" viewBox="0 0 27 9"><path d="M0.5 7 V4 A3.5 3.5 0 0 1 7.5 4 V7 Z" fill="#c8c8c8"/><path d="M0.5 6.5 H7.5" stroke="#2b2b2b" stroke-width="0.6"/><circle cx="2.5" cy="4" r="0.8" fill="#2b2b2b"/><circle cx="5.5" cy="4" r="0.8" fill="#2b2b2b"/><circle cx="14" cy="4.2" r="1.6" fill="#c8c8c8"/><path d="M14 1.2 V2 M14 6.4 V7.2 M11 4.2 H11.8 M16.2 4.2 H17 M11.9 2.1 L12.5 2.7 M15.5 5.7 L16.1 6.3 M16.1 2.1 L15.5 2.7 M12.5 5.7 L11.9 6.3" stroke="#c8c8c8" stroke-width="0.8"/><path d="M20 7.5 L26 0.5" stroke="#c8c8c8" stroke-width="1"/></svg>
<div class="a" style="left:381.0px;top:1.5px;width:8.3px;height:7.529999999999999px;background:#262626;"></div>
<div class="a" style="left:390.3px;top:1.5px;width:8.3px;height:7.529999999999999px;background:#262626;"></div>
<div class="a" style="left:399.6px;top:1.5px;width:8.3px;height:7.529999999999999px;background:#262626;"></div>
<div class="a" style="left:408.9px;top:1.5px;width:8.3px;height:7.529999999999999px;background:#262626;"></div>
<div class="a" style="left:418.2px;top:1.5px;width:8.3px;height:7.529999999999999px;background:#262626;"></div>
<div class="a" style="left:427.5px;top:1.5px;width:8.3px;height:7.529999999999999px;background:#262626;"></div>
<svg class="a" style="left:437.5px;top:1.2649999999999997px;" width="8" height="8" viewBox="0 0 8 8"><path d="M4 4 A0.9 0.9 0 0 1 5.2 3.6 A1.8 1.8 0 0 1 3.6 6 A2.7 2.7 0 0 1 1.3 3.2 A3.2 3.2 0 0 1 7.2 3.5" stroke="#b8b8b8" stroke-width="0.9" fill="none"/></svg>
<div class="a" style="left:449.7px;top:1.8px;width:53.3px;height:7.129999999999999px;background:#1f1f1f;"></div>
<div class="t" style="left:452.6px;top:1.66px;font-size:7.2px;color:#c8c8c8;transform:scaleX(0.931);">10. Head</div>
<svg class="a" style="left:496.5px;top:3.7649999999999997px;" width="6" height="4" viewBox="0 0 6 4"><path d="M0.5 0.5 L3 3 L5.5 0.5" stroke="#9a9a9a" stroke-width="0.9" fill="none"/></svg>
<div class="a" style="left:3px;top:10.53px;width:512.5px;height:9.93px;background:#232323;"></div>
<div class="a" style="left:3px;top:20.459999999999997px;width:512.5px;height:0.6px;background:#1d1d1d;"></div>
<svg class="a" style="left:5.5px;top:12.794999999999998px;" width="25" height="6" viewBox="0 0 25 6"><path d="M4.5 0.5 L0.5 3 L4.5 5.5 Z" fill="#c0c0c0"/><path d="M11.5 0.3 L14.2 3 L11.5 5.7 L8.8 3 Z" stroke="#888" fill="none" stroke-width="0.9"/><path d="M19.5 0.5 L23.5 3 L19.5 5.5 Z" fill="#c0c0c0"/></svg>
<svg class="a" style="left:76.5px;top:11.794999999999998px;" width="8" height="8" viewBox="0 0 8 8"><circle cx="4" cy="4.5" r="3" stroke="#3a80d0" stroke-width="1.1" fill="none"/><path d="M4 4.5 L5.5 3" stroke="#3a80d0" stroke-width="0.9"/><rect x="3" y="0" width="2" height="1" fill="#3a80d0"/></svg>
<svg class="a" style="left:88px;top:11.794999999999998px;" width="8" height="8" viewBox="0 0 8 8"><path d="M0.5 0.5 V7.5 H7.5" stroke="#9a9a9a" fill="none" stroke-width="0.9"/><path d="M1.5 6 L3.5 3 L5 5 L7 1.5" stroke="#9a9a9a" fill="none" stroke-width="0.8"/></svg>
<div class="t" style="left:100px;top:12.19px;font-size:7.2px;color:#858585;transform:scaleX(0.962);">Rotation</div>
<div class="t" style="left:352px;top:12.59px;font-size:7px;color:#3a6fb5;transform:scaleX(1.007);">0x-4.0°</div>
<svg class="a" style="left:445px;top:11.794999999999998px;" width="8" height="8" viewBox="0 0 8 8"><path d="M4 4 A0.9 0.9 0 0 1 5.2 3.6 A1.8 1.8 0 0 1 3.6 6 A2.7 2.7 0 0 1 1.3 3.2 A3.2 3.2 0 0 1 7.2 3.5" stroke="#b8b8b8" stroke-width="0.9" fill="none"/></svg>
<div class="a" style="left:3px;top:21.06px;width:512.5px;height:9.93px;background:#2d2d2d;"></div>
<div class="a" style="left:3px;top:30.989999999999995px;width:512.5px;height:0.6px;background:#1d1d1d;"></div>
<svg class="a" style="left:4px;top:23.325px;" width="8" height="6" viewBox="0 0 8 6"><path d="M0.3 3 C2 0.3 6 0.3 7.7 3 C6 5.7 2 5.7 0.3 3 Z" fill="#c8c8c8"/><circle cx="4" cy="3" r="1.2" fill="#2d2d2d"/></svg>
<div class="a" style="left:21.7px;top:22.56px;width:9px;height:7.529999999999999px;background:#252525;"></div>
<div class="a" style="left:32.5px;top:22.56px;width:8px;height:7.529999999999999px;background:#252525;"></div>
<svg class="a" style="left:47.3px;top:24.325px;" width="5" height="4" viewBox="0 0 5 4"><path d="M0.6 0.8 L2.4 2.8 L4.2 0.8" stroke="#7a7a7a" stroke-width="0.9" fill="none"/></svg>
<div class="a" style="left:54px;top:23.36px;width:7.7px;height:7.2px;background:#c6c2e0;"></div>
<div class="t" style="left:66.7px;top:22.72px;font-size:7.2px;color:#a0a0a0;">2</div>
<svg class="a" style="left:79.5px;top:22.56px;" width="7.5" height="8" viewBox="0 0 7.5 8"><rect x="0.3" y="0.3" width="7" height="7.4" rx="1.5" fill="#8e2c16"/><path d="M1.8 6.8 V3.2 A2 2 0 0 1 5.8 3.2 V6.8 Z" fill="#e89a70"/><rect x="2.8" y="4" width="2" height="2.8" fill="#6a1606"/></svg>
<div class="t" style="left:91.3px;top:22.57px;font-size:7.5px;color:#e0e0e0;transform:scaleX(0.959);-webkit-text-stroke:0.35px #e0e0e0;">hairup2</div>
<div class="a" style="left:248.6px;top:22.86px;width:39.8px;height:7.129999999999999px;background:#1f1f1f;"></div>
<div class="t" style="left:251px;top:22.72px;font-size:7.2px;color:#c8c8c8;transform:scaleX(0.991);">Normal</div>
<svg class="a" style="left:282px;top:24.825px;" width="6" height="4" viewBox="0 0 6 4"><path d="M0.5 0.5 L3 3 L5.5 0.5" stroke="#9a9a9a" stroke-width="0.9" fill="none"/></svg>
<div class="a" style="left:293px;top:22.86px;width:8px;height:7.129999999999999px;background:#262626;"></div>
<div class="a" style="left:305px;top:22.86px;width:38px;height:7.129999999999999px;background:#1f1f1f;"></div>
<div class="t" style="left:308.8px;top:22.72px;font-size:7.2px;color:#c8c8c8;transform:scaleX(0.976);">None</div>
<svg class="a" style="left:338px;top:24.825px;" width="6" height="4" viewBox="0 0 6 4"><path d="M0.5 0.5 L3 3 L5.5 0.5" stroke="#9a9a9a" stroke-width="0.9" fill="none"/></svg>
<svg class="a" style="left:352px;top:22.259999999999998px;" width="27" height="9" viewBox="0 0 27 9"><path d="M0.5 7 V4 A3.5 3.5 0 0 1 7.5 4 V7 Z" fill="#c8c8c8"/><path d="M0.5 6.5 H7.5" stroke="#2b2b2b" stroke-width="0.6"/><circle cx="2.5" cy="4" r="0.8" fill="#2b2b2b"/><circle cx="5.5" cy="4" r="0.8" fill="#2b2b2b"/><circle cx="14" cy="4.2" r="1.6" fill="#c8c8c8"/><path d="M14 1.2 V2 M14 6.4 V7.2 M11 4.2 H11.8 M16.2 4.2 H17 M11.9 2.1 L12.5 2.7 M15.5 5.7 L16.1 6.3 M16.1 2.1 L15.5 2.7 M12.5 5.7 L11.9 6.3" stroke="#c8c8c8" stroke-width="0.8"/><path d="M20 7.5 L26 0.5" stroke="#c8c8c8" stroke-width="1"/></svg>
<div class="a" style="left:381.0px;top:22.56px;width:8.3px;height:7.529999999999999px;background:#262626;"></div>
<div class="a" style="left:390.3px;top:22.56px;width:8.3px;height:7.529999999999999px;background:#262626;"></div>
<div class="a" style="left:399.6px;top:22.56px;width:8.3px;height:7.529999999999999px;background:#262626;"></div>
<div class="a" style="left:408.9px;top:22.56px;width:8.3px;height:7.529999999999999px;background:#262626;"></div>
<div class="a" style="left:418.2px;top:22.56px;width:8.3px;height:7.529999999999999px;background:#262626;"></div>
<div class="a" style="left:427.5px;top:22.56px;width:8.3px;height:7.529999999999999px;background:#262626;"></div>
<svg class="a" style="left:437.5px;top:22.325px;" width="8" height="8" viewBox="0 0 8 8"><path d="M4 4 A0.9 0.9 0 0 1 5.2 3.6 A1.8 1.8 0 0 1 3.6 6 A2.7 2.7 0 0 1 1.3 3.2 A3.2 3.2 0 0 1 7.2 3.5" stroke="#b8b8b8" stroke-width="0.9" fill="none"/></svg>
<div class="a" style="left:449.7px;top:22.86px;width:53.3px;height:7.129999999999999px;background:#1f1f1f;"></div>
<div class="t" style="left:452.6px;top:22.72px;font-size:7.2px;color:#c8c8c8;transform:scaleX(0.931);">10. Head</div>
<svg class="a" style="left:496.5px;top:24.825px;" width="6" height="4" viewBox="0 0 6 4"><path d="M0.5 0.5 L3 3 L5.5 0.5" stroke="#9a9a9a" stroke-width="0.9" fill="none"/></svg>
<div class="a" style="left:3px;top:31.589999999999996px;width:512.5px;height:9.93px;background:#232323;"></div>
<div class="a" style="left:3px;top:41.519999999999996px;width:512.5px;height:0.6px;background:#1d1d1d;"></div>
<svg class="a" style="left:5.5px;top:33.855px;" width="25" height="6" viewBox="0 0 25 6"><path d="M4.5 0.5 L0.5 3 L4.5 5.5 Z" fill="#c0c0c0"/><path d="M11.5 0.3 L14.2 3 L11.5 5.7 L8.8 3 Z" stroke="#888" fill="none" stroke-width="0.9"/><path d="M19.5 0.5 L23.5 3 L19.5 5.5 Z" fill="#c0c0c0"/></svg>
<svg class="a" style="left:76.5px;top:32.855px;" width="8" height="8" viewBox="0 0 8 8"><circle cx="4" cy="4.5" r="3" stroke="#3a80d0" stroke-width="1.1" fill="none"/><path d="M4 4.5 L5.5 3" stroke="#3a80d0" stroke-width="0.9"/><rect x="3" y="0" width="2" height="1" fill="#3a80d0"/></svg>
<svg class="a" style="left:88px;top:32.855px;" width="8" height="8" viewBox="0 0 8 8"><path d="M0.5 0.5 V7.5 H7.5" stroke="#9a9a9a" fill="none" stroke-width="0.9"/><path d="M1.5 6 L3.5 3 L5 5 L7 1.5" stroke="#9a9a9a" fill="none" stroke-width="0.8"/></svg>
<div class="t" style="left:100px;top:33.25px;font-size:7.2px;color:#858585;transform:scaleX(0.962);">Rotation</div>
<div class="t" style="left:352px;top:33.65px;font-size:7px;color:#3a6fb5;transform:scaleX(0.979);">0x-12.0°</div>
<svg class="a" style="left:445px;top:32.855px;" width="8" height="8" viewBox="0 0 8 8"><path d="M4 4 A0.9 0.9 0 0 1 5.2 3.6 A1.8 1.8 0 0 1 3.6 6 A2.7 2.7 0 0 1 1.3 3.2 A3.2 3.2 0 0 1 7.2 3.5" stroke="#b8b8b8" stroke-width="0.9" fill="none"/></svg>
<div class="a" style="left:3px;top:42.12px;width:512.5px;height:9.93px;background:#2d2d2d;"></div>
<div class="a" style="left:3px;top:52.05px;width:512.5px;height:0.6px;background:#1d1d1d;"></div>
<svg class="a" style="left:4px;top:44.385px;" width="8" height="6" viewBox="0 0 8 6"><path d="M0.3 3 C2 0.3 6 0.3 7.7 3 C6 5.7 2 5.7 0.3 3 Z" fill="#c8c8c8"/><circle cx="4" cy="3" r="1.2" fill="#2d2d2d"/></svg>
<div class="a" style="left:21.7px;top:43.62px;width:9px;height:7.529999999999999px;background:#252525;"></div>
<div class="a" style="left:32.5px;top:43.62px;width:8px;height:7.529999999999999px;background:#252525;"></div>
<svg class="a" style="left:47.3px;top:45.385px;" width="5" height="4" viewBox="0 0 5 4"><path d="M0.6 0.8 L2.4 2.8 L4.2 0.8" stroke="#7a7a7a" stroke-width="0.9" fill="none"/></svg>
<div class="a" style="left:54px;top:44.419999999999995px;width:7.7px;height:7.2px;background:#c6c2e0;"></div>
<div class="t" style="left:66.7px;top:43.78px;font-size:7.2px;color:#a0a0a0;">3</div>
<svg class="a" style="left:79.5px;top:43.62px;" width="7.5" height="8" viewBox="0 0 7.5 8"><rect x="0.3" y="0.3" width="7" height="7.4" rx="1.5" fill="#8e2c16"/><path d="M1.8 6.8 V3.2 A2 2 0 0 1 5.8 3.2 V6.8 Z" fill="#e89a70"/><rect x="2.8" y="4" width="2" height="2.8" fill="#6a1606"/></svg>
<div class="t" style="left:91.3px;top:43.63px;font-size:7.5px;color:#e0e0e0;transform:scaleX(0.933);-webkit-text-stroke:0.35px #e0e0e0;">Hairup3</div>
<div class="a" style="left:248.6px;top:43.919999999999995px;width:39.8px;height:7.129999999999999px;background:#1f1f1f;"></div>
<div class="t" style="left:251px;top:43.78px;font-size:7.2px;color:#c8c8c8;transform:scaleX(0.991);">Normal</div>
<svg class="a" style="left:282px;top:45.885px;" width="6" height="4" viewBox="0 0 6 4"><path d="M0.5 0.5 L3 3 L5.5 0.5" stroke="#9a9a9a" stroke-width="0.9" fill="none"/></svg>
<div class="a" style="left:293px;top:43.919999999999995px;width:8px;height:7.129999999999999px;background:#262626;"></div>
<div class="a" style="left:305px;top:43.919999999999995px;width:38px;height:7.129999999999999px;background:#1f1f1f;"></div>
<div class="t" style="left:308.8px;top:43.78px;font-size:7.2px;color:#c8c8c8;transform:scaleX(0.976);">None</div>
<svg class="a" style="left:338px;top:45.885px;" width="6" height="4" viewBox="0 0 6 4"><path d="M0.5 0.5 L3 3 L5.5 0.5" stroke="#9a9a9a" stroke-width="0.9" fill="none"/></svg>
<svg class="a" style="left:352px;top:43.32px;" width="27" height="9" viewBox="0 0 27 9"><path d="M0.5 7 V4 A3.5 3.5 0 0 1 7.5 4 V7 Z" fill="#c8c8c8"/><path d="M0.5 6.5 H7.5" stroke="#2b2b2b" stroke-width="0.6"/><circle cx="2.5" cy="4" r="0.8" fill="#2b2b2b"/><circle cx="5.5" cy="4" r="0.8" fill="#2b2b2b"/><circle cx="14" cy="4.2" r="1.6" fill="#c8c8c8"/><path d="M14 1.2 V2 M14 6.4 V7.2 M11 4.2 H11.8 M16.2 4.2 H17 M11.9 2.1 L12.5 2.7 M15.5 5.7 L16.1 6.3 M16.1 2.1 L15.5 2.7 M12.5 5.7 L11.9 6.3" stroke="#c8c8c8" stroke-width="0.8"/><path d="M20 7.5 L26 0.5" stroke="#c8c8c8" stroke-width="1"/></svg>
<div class="a" style="left:381.0px;top:43.62px;width:8.3px;height:7.529999999999999px;background:#262626;"></div>
<div class="a" style="left:390.3px;top:43.62px;width:8.3px;height:7.529999999999999px;background:#262626;"></div>
<div class="a" style="left:399.6px;top:43.62px;width:8.3px;height:7.529999999999999px;background:#262626;"></div>
<div class="a" style="left:408.9px;top:43.62px;width:8.3px;height:7.529999999999999px;background:#262626;"></div>
<div class="a" style="left:418.2px;top:43.62px;width:8.3px;height:7.529999999999999px;background:#262626;"></div>
<div class="a" style="left:427.5px;top:43.62px;width:8.3px;height:7.529999999999999px;background:#262626;"></div>
<svg class="a" style="left:437.5px;top:43.385px;" width="8" height="8" viewBox="0 0 8 8"><path d="M4 4 A0.9 0.9 0 0 1 5.2 3.6 A1.8 1.8 0 0 1 3.6 6 A2.7 2.7 0 0 1 1.3 3.2 A3.2 3.2 0 0 1 7.2 3.5" stroke="#b8b8b8" stroke-width="0.9" fill="none"/></svg>
<div class="a" style="left:449.7px;top:43.919999999999995px;width:53.3px;height:7.129999999999999px;background:#1f1f1f;"></div>
<div class="t" style="left:452.6px;top:43.78px;font-size:7.2px;color:#c8c8c8;transform:scaleX(0.931);">10. Head</div>
<svg class="a" style="left:496.5px;top:45.885px;" width="6" height="4" viewBox="0 0 6 4"><path d="M0.5 0.5 L3 3 L5.5 0.5" stroke="#9a9a9a" stroke-width="0.9" fill="none"/></svg>
<div class="a" style="left:3px;top:52.65px;width:512.5px;height:9.93px;background:#232323;"></div>
<div class="a" style="left:3px;top:62.58px;width:512.5px;height:0.6px;background:#1d1d1d;"></div>
<svg class="a" style="left:5.5px;top:54.915px;" width="25" height="6" viewBox="0 0 25 6"><path d="M4.5 0.5 L0.5 3 L4.5 5.5 Z" fill="#c0c0c0"/><path d="M11.5 0.3 L14.2 3 L11.5 5.7 L8.8 3 Z" stroke="#888" fill="none" stroke-width="0.9"/><path d="M19.5 0.5 L23.5 3 L19.5 5.5 Z" fill="#c0c0c0"/></svg>
<svg class="a" style="left:76.5px;top:53.915px;" width="8" height="8" viewBox="0 0 8 8"><circle cx="4" cy="4.5" r="3" stroke="#3a80d0" stroke-width="1.1" fill="none"/><path d="M4 4.5 L5.5 3" stroke="#3a80d0" stroke-width="0.9"/><rect x="3" y="0" width="2" height="1" fill="#3a80d0"/></svg>
<svg class="a" style="left:88px;top:53.915px;" width="8" height="8" viewBox="0 0 8 8"><path d="M0.5 0.5 V7.5 H7.5" stroke="#9a9a9a" fill="none" stroke-width="0.9"/><path d="M1.5 6 L3.5 3 L5 5 L7 1.5" stroke="#9a9a9a" fill="none" stroke-width="0.8"/></svg>
<div class="t" style="left:100px;top:54.31px;font-size:7.2px;color:#858585;transform:scaleX(0.962);">Rotation</div>
<div class="t" style="left:352px;top:54.71px;font-size:7px;color:#3a6fb5;transform:scaleX(0.933);">0x+2.0°</div>
<svg class="a" style="left:445px;top:53.915px;" width="8" height="8" viewBox="0 0 8 8"><path d="M4 4 A0.9 0.9 0 0 1 5.2 3.6 A1.8 1.8 0 0 1 3.6 6 A2.7 2.7 0 0 1 1.3 3.2 A3.2 3.2 0 0 1 7.2 3.5" stroke="#b8b8b8" stroke-width="0.9" fill="none"/></svg>
<div class="a" style="left:3px;top:63.17999999999999px;width:512.5px;height:9.93px;background:#2d2d2d;"></div>
<div class="a" style="left:3px;top:73.11px;width:512.5px;height:0.6px;background:#1d1d1d;"></div>
<svg class="a" style="left:4px;top:65.445px;" width="8" height="6" viewBox="0 0 8 6"><path d="M0.3 3 C2 0.3 6 0.3 7.7 3 C6 5.7 2 5.7 0.3 3 Z" fill="#c8c8c8"/><circle cx="4" cy="3" r="1.2" fill="#2d2d2d"/></svg>
<div class="a" style="left:21.7px;top:64.67999999999999px;width:9px;height:7.529999999999999px;background:#252525;"></div>
<div class="a" style="left:32.5px;top:64.67999999999999px;width:8px;height:7.529999999999999px;background:#252525;"></div>
<svg class="a" style="left:47.3px;top:66.445px;" width="5" height="4" viewBox="0 0 5 4"><path d="M0.6 0.8 L2.4 2.8 L4.2 0.8" stroke="#7a7a7a" stroke-width="0.9" fill="none"/></svg>
<div class="a" style="left:54px;top:65.47999999999999px;width:7.7px;height:7.2px;background:#c6c2e0;"></div>
<div class="t" style="left:66.7px;top:64.84px;font-size:7.2px;color:#a0a0a0;">4</div>
<svg class="a" style="left:79.5px;top:64.67999999999999px;" width="7.5" height="8" viewBox="0 0 7.5 8"><rect x="0.3" y="0.3" width="7" height="7.4" rx="1.5" fill="#8e2c16"/><path d="M1.8 6.8 V3.2 A2 2 0 0 1 5.8 3.2 V6.8 Z" fill="#e89a70"/><rect x="2.8" y="4" width="2" height="2.8" fill="#6a1606"/></svg>
<div class="t" style="left:91.3px;top:64.69px;font-size:7.5px;color:#e0e0e0;transform:scaleX(0.933);-webkit-text-stroke:0.35px #e0e0e0;">Hairup4</div>
<div class="a" style="left:248.6px;top:64.97999999999999px;width:39.8px;height:7.129999999999999px;background:#1f1f1f;"></div>
<div class="t" style="left:251px;top:64.84px;font-size:7.2px;color:#c8c8c8;transform:scaleX(0.991);">Normal</div>
<svg class="a" style="left:282px;top:66.945px;" width="6" height="4" viewBox="0 0 6 4"><path d="M0.5 0.5 L3 3 L5.5 0.5" stroke="#9a9a9a" stroke-width="0.9" fill="none"/></svg>
<div class="a" style="left:293px;top:64.97999999999999px;width:8px;height:7.129999999999999px;background:#262626;"></div>
<div class="a" style="left:305px;top:64.97999999999999px;width:38px;height:7.129999999999999px;background:#1f1f1f;"></div>
<div class="t" style="left:308.8px;top:64.84px;font-size:7.2px;color:#c8c8c8;transform:scaleX(0.976);">None</div>
<svg class="a" style="left:338px;top:66.945px;" width="6" height="4" viewBox="0 0 6 4"><path d="M0.5 0.5 L3 3 L5.5 0.5" stroke="#9a9a9a" stroke-width="0.9" fill="none"/></svg>
<svg class="a" style="left:352px;top:64.38px;" width="27" height="9" viewBox="0 0 27 9"><path d="M0.5 7 V4 A3.5 3.5 0 0 1 7.5 4 V7 Z" fill="#c8c8c8"/><path d="M0.5 6.5 H7.5" stroke="#2b2b2b" stroke-width="0.6"/><circle cx="2.5" cy="4" r="0.8" fill="#2b2b2b"/><circle cx="5.5" cy="4" r="0.8" fill="#2b2b2b"/><circle cx="14" cy="4.2" r="1.6" fill="#c8c8c8"/><path d="M14 1.2 V2 M14 6.4 V7.2 M11 4.2 H11.8 M16.2 4.2 H17 M11.9 2.1 L12.5 2.7 M15.5 5.7 L16.1 6.3 M16.1 2.1 L15.5 2.7 M12.5 5.7 L11.9 6.3" stroke="#c8c8c8" stroke-width="0.8"/><path d="M20 7.5 L26 0.5" stroke="#c8c8c8" stroke-width="1"/></svg>
<div class="a" style="left:381.0px;top:64.67999999999999px;width:8.3px;height:7.529999999999999px;background:#262626;"></div>
<div class="a" style="left:390.3px;top:64.67999999999999px;width:8.3px;height:7.529999999999999px;background:#262626;"></div>
<div class="a" style="left:399.6px;top:64.67999999999999px;width:8.3px;height:7.529999999999999px;background:#262626;"></div>
<div class="a" style="left:408.9px;top:64.67999999999999px;width:8.3px;height:7.529999999999999px;background:#262626;"></div>
<div class="a" style="left:418.2px;top:64.67999999999999px;width:8.3px;height:7.529999999999999px;background:#262626;"></div>
<div class="a" style="left:427.5px;top:64.67999999999999px;width:8.3px;height:7.529999999999999px;background:#262626;"></div>
<svg class="a" style="left:437.5px;top:64.445px;" width="8" height="8" viewBox="0 0 8 8"><path d="M4 4 A0.9 0.9 0 0 1 5.2 3.6 A1.8 1.8 0 0 1 3.6 6 A2.7 2.7 0 0 1 1.3 3.2 A3.2 3.2 0 0 1 7.2 3.5" stroke="#b8b8b8" stroke-width="0.9" fill="none"/></svg>
<div class="a" style="left:449.7px;top:64.97999999999999px;width:53.3px;height:7.129999999999999px;background:#1f1f1f;"></div>
<div class="t" style="left:452.6px;top:64.84px;font-size:7.2px;color:#c8c8c8;transform:scaleX(0.931);">10. Head</div>
<svg class="a" style="left:496.5px;top:66.945px;" width="6" height="4" viewBox="0 0 6 4"><path d="M0.5 0.5 L3 3 L5.5 0.5" stroke="#9a9a9a" stroke-width="0.9" fill="none"/></svg>
<div class="a" style="left:3px;top:73.71px;width:512.5px;height:9.93px;background:#232323;"></div>
<div class="a" style="left:3px;top:83.64px;width:512.5px;height:0.6px;background:#1d1d1d;"></div>
<svg class="a" style="left:5.5px;top:75.975px;" width="25" height="6" viewBox="0 0 25 6"><path d="M4.5 0.5 L0.5 3 L4.5 5.5 Z" fill="#c0c0c0"/><path d="M11.5 0.3 L14.2 3 L11.5 5.7 L8.8 3 Z" stroke="#888" fill="none" stroke-width="0.9"/><path d="M19.5 0.5 L23.5 3 L19.5 5.5 Z" fill="#c0c0c0"/></svg>
<svg class="a" style="left:76.5px;top:74.975px;" width="8" height="8" viewBox="0 0 8 8"><circle cx="4" cy="4.5" r="3" stroke="#3a80d0" stroke-width="1.1" fill="none"/><path d="M4 4.5 L5.5 3" stroke="#3a80d0" stroke-width="0.9"/><rect x="3" y="0" width="2" height="1" fill="#3a80d0"/></svg>
<svg class="a" style="left:88px;top:74.975px;" width="8" height="8" viewBox="0 0 8 8"><path d="M0.5 0.5 V7.5 H7.5" stroke="#9a9a9a" fill="none" stroke-width="0.9"/><path d="M1.5 6 L3.5 3 L5 5 L7 1.5" stroke="#9a9a9a" fill="none" stroke-width="0.8"/></svg>
<div class="t" style="left:100px;top:75.38px;font-size:7.2px;color:#858585;transform:scaleX(0.962);">Rotation</div>
<div class="t" style="left:352px;top:75.77px;font-size:7px;color:#3a6fb5;transform:scaleX(0.917);">0x+10.0°</div>
<svg class="a" style="left:445px;top:74.975px;" width="8" height="8" viewBox="0 0 8 8"><path d="M4 4 A0.9 0.9 0 0 1 5.2 3.6 A1.8 1.8 0 0 1 3.6 6 A2.7 2.7 0 0 1 1.3 3.2 A3.2 3.2 0 0 1 7.2 3.5" stroke="#b8b8b8" stroke-width="0.9" fill="none"/></svg>
<div class="a" style="left:3px;top:84.24px;width:512.5px;height:9.93px;background:#2d2d2d;"></div>
<div class="a" style="left:3px;top:94.17px;width:512.5px;height:0.6px;background:#1d1d1d;"></div>
<svg class="a" style="left:4px;top:86.505px;" width="8" height="6" viewBox="0 0 8 6"><path d="M0.3 3 C2 0.3 6 0.3 7.7 3 C6 5.7 2 5.7 0.3 3 Z" fill="#c8c8c8"/><circle cx="4" cy="3" r="1.2" fill="#2d2d2d"/></svg>
<div class="a" style="left:21.7px;top:85.74px;width:9px;height:7.529999999999999px;background:#252525;"></div>
<div class="a" style="left:32.5px;top:85.74px;width:8px;height:7.529999999999999px;background:#252525;"></div>
<svg class="a" style="left:47.3px;top:87.505px;" width="5" height="4" viewBox="0 0 5 4"><path d="M1.5 0 L3.3 2 L1.5 4" stroke="#7a7a7a" stroke-width="0.9" fill="none"/></svg>
<div class="a" style="left:54px;top:86.53999999999999px;width:7.7px;height:7.2px;background:#c6c2e0;"></div>
<div class="t" style="left:66.7px;top:85.91px;font-size:7.2px;color:#a0a0a0;">5</div>
<svg class="a" style="left:79.5px;top:85.74px;" width="7.5" height="8" viewBox="0 0 7.5 8"><rect x="0.3" y="0.3" width="7" height="7.4" rx="1.5" fill="#8e2c16"/><path d="M1.8 6.8 V3.2 A2 2 0 0 1 5.8 3.2 V6.8 Z" fill="#e89a70"/><rect x="2.8" y="4" width="2" height="2.8" fill="#6a1606"/></svg>
<div class="t" style="left:91.3px;top:85.75px;font-size:7.5px;color:#e0e0e0;transform:scaleX(0.882);-webkit-text-stroke:0.35px #e0e0e0;">Rhand</div>
<div class="a" style="left:248.6px;top:86.03999999999999px;width:39.8px;height:7.129999999999999px;background:#1f1f1f;"></div>
<div class="t" style="left:251px;top:85.91px;font-size:7.2px;color:#c8c8c8;transform:scaleX(0.991);">Normal</div>
<svg class="a" style="left:282px;top:88.005px;" width="6" height="4" viewBox="0 0 6 4"><path d="M0.5 0.5 L3 3 L5.5 0.5" stroke="#9a9a9a" stroke-width="0.9" fill="none"/></svg>
<div class="a" style="left:293px;top:86.03999999999999px;width:8px;height:7.129999999999999px;background:#262626;"></div>
<div class="a" style="left:305px;top:86.03999999999999px;width:38px;height:7.129999999999999px;background:#1f1f1f;"></div>
<div class="t" style="left:308.8px;top:85.91px;font-size:7.2px;color:#c8c8c8;transform:scaleX(0.976);">None</div>
<svg class="a" style="left:338px;top:88.005px;" width="6" height="4" viewBox="0 0 6 4"><path d="M0.5 0.5 L3 3 L5.5 0.5" stroke="#9a9a9a" stroke-width="0.9" fill="none"/></svg>
<svg class="a" style="left:352px;top:85.44px;" width="27" height="9" viewBox="0 0 27 9"><path d="M0.5 7 V4 A3.5 3.5 0 0 1 7.5 4 V7 Z" fill="#c8c8c8"/><path d="M0.5 6.5 H7.5" stroke="#2b2b2b" stroke-width="0.6"/><circle cx="2.5" cy="4" r="0.8" fill="#2b2b2b"/><circle cx="5.5" cy="4" r="0.8" fill="#2b2b2b"/><circle cx="14" cy="4.2" r="1.6" fill="#c8c8c8"/><path d="M14 1.2 V2 M14 6.4 V7.2 M11 4.2 H11.8 M16.2 4.2 H17 M11.9 2.1 L12.5 2.7 M15.5 5.7 L16.1 6.3 M16.1 2.1 L15.5 2.7 M12.5 5.7 L11.9 6.3" stroke="#c8c8c8" stroke-width="0.8"/><path d="M20 7.5 L26 0.5" stroke="#c8c8c8" stroke-width="1"/></svg>
<div class="a" style="left:381.0px;top:85.74px;width:8.3px;height:7.529999999999999px;background:#262626;"></div>
<div class="a" style="left:390.3px;top:85.74px;width:8.3px;height:7.529999999999999px;background:#262626;"></div>
<div class="a" style="left:399.6px;top:85.74px;width:8.3px;height:7.529999999999999px;background:#262626;"></div>
<div class="a" style="left:408.9px;top:85.74px;width:8.3px;height:7.529999999999999px;background:#262626;"></div>
<div class="a" style="left:418.2px;top:85.74px;width:8.3px;height:7.529999999999999px;background:#262626;"></div>
<div class="a" style="left:427.5px;top:85.74px;width:8.3px;height:7.529999999999999px;background:#262626;"></div>
<svg class="a" style="left:437.5px;top:85.505px;" width="8" height="8" viewBox="0 0 8 8"><path d="M4 4 A0.9 0.9 0 0 1 5.2 3.6 A1.8 1.8 0 0 1 3.6 6 A2.7 2.7 0 0 1 1.3 3.2 A3.2 3.2 0 0 1 7.2 3.5" stroke="#b8b8b8" stroke-width="0.9" fill="none"/></svg>
<div class="a" style="left:449.7px;top:86.03999999999999px;width:53.3px;height:7.129999999999999px;background:#1f1f1f;"></div>
<div class="t" style="left:452.6px;top:85.91px;font-size:7.2px;color:#c8c8c8;transform:scaleX(0.959);">6. Right Arm</div>
<svg class="a" style="left:496.5px;top:88.005px;" width="6" height="4" viewBox="0 0 6 4"><path d="M0.5 0.5 L3 3 L5.5 0.5" stroke="#9a9a9a" stroke-width="0.9" fill="none"/></svg>
<div class="a" style="left:3px;top:94.77px;width:512.5px;height:9.93px;background:#2d2d2d;"></div>
<div class="a" style="left:3px;top:104.7px;width:512.5px;height:0.6px;background:#1d1d1d;"></div>
<svg class="a" style="left:4px;top:97.035px;" width="8" height="6" viewBox="0 0 8 6"><path d="M0.3 3 C2 0.3 6 0.3 7.7 3 C6 5.7 2 5.7 0.3 3 Z" fill="#c8c8c8"/><circle cx="4" cy="3" r="1.2" fill="#2d2d2d"/></svg>
<div class="a" style="left:21.7px;top:96.27px;width:9px;height:7.529999999999999px;background:#252525;"></div>
<div class="a" style="left:32.5px;top:96.27px;width:8px;height:7.529999999999999px;background:#252525;"></div>
<svg class="a" style="left:47.3px;top:98.035px;" width="5" height="4" viewBox="0 0 5 4"><path d="M1.5 0 L3.3 2 L1.5 4" stroke="#7a7a7a" stroke-width="0.9" fill="none"/></svg>
<div class="a" style="left:54px;top:97.07px;width:7.7px;height:7.2px;background:#c6c2e0;"></div>
<div class="t" style="left:66.7px;top:96.44px;font-size:7.2px;color:#a0a0a0;">6</div>
<svg class="a" style="left:79.5px;top:96.27px;" width="7.5" height="8" viewBox="0 0 7.5 8"><rect x="0.3" y="0.3" width="7" height="7.4" rx="1.5" fill="#8e2c16"/><path d="M1.8 6.8 V3.2 A2 2 0 0 1 5.8 3.2 V6.8 Z" fill="#e89a70"/><rect x="2.8" y="4" width="2" height="2.8" fill="#6a1606"/></svg>
<div class="t" style="left:91.3px;top:96.28px;font-size:7.5px;color:#e0e0e0;transform:scaleX(0.957);-webkit-text-stroke:0.35px #e0e0e0;">Right Arm</div>
<div class="a" style="left:248.6px;top:96.57px;width:39.8px;height:7.129999999999999px;background:#1f1f1f;"></div>
<div class="t" style="left:251px;top:96.44px;font-size:7.2px;color:#c8c8c8;transform:scaleX(0.991);">Normal</div>
<svg class="a" style="left:282px;top:98.535px;" width="6" height="4" viewBox="0 0 6 4"><path d="M0.5 0.5 L3 3 L5.5 0.5" stroke="#9a9a9a" stroke-width="0.9" fill="none"/></svg>
<div class="a" style="left:293px;top:96.57px;width:8px;height:7.129999999999999px;background:#262626;"></div>
<div class="a" style="left:305px;top:96.57px;width:38px;height:7.129999999999999px;background:#1f1f1f;"></div>
<div class="t" style="left:308.8px;top:96.44px;font-size:7.2px;color:#c8c8c8;transform:scaleX(0.976);">None</div>
<svg class="a" style="left:338px;top:98.535px;" width="6" height="4" viewBox="0 0 6 4"><path d="M0.5 0.5 L3 3 L5.5 0.5" stroke="#9a9a9a" stroke-width="0.9" fill="none"/></svg>
<svg class="a" style="left:352px;top:95.97px;" width="27" height="9" viewBox="0 0 27 9"><path d="M0.5 7 V4 A3.5 3.5 0 0 1 7.5 4 V7 Z" fill="#c8c8c8"/><path d="M0.5 6.5 H7.5" stroke="#2b2b2b" stroke-width="0.6"/><circle cx="2.5" cy="4" r="0.8" fill="#2b2b2b"/><circle cx="5.5" cy="4" r="0.8" fill="#2b2b2b"/><circle cx="14" cy="4.2" r="1.6" fill="#c8c8c8"/><path d="M14 1.2 V2 M14 6.4 V7.2 M11 4.2 H11.8 M16.2 4.2 H17 M11.9 2.1 L12.5 2.7 M15.5 5.7 L16.1 6.3 M16.1 2.1 L15.5 2.7 M12.5 5.7 L11.9 6.3" stroke="#c8c8c8" stroke-width="0.8"/><path d="M20 7.5 L26 0.5" stroke="#c8c8c8" stroke-width="1"/></svg>
<div class="a" style="left:381.0px;top:96.27px;width:8.3px;height:7.529999999999999px;background:#262626;"></div>
<div class="a" style="left:390.3px;top:96.27px;width:8.3px;height:7.529999999999999px;background:#262626;"></div>
<div class="a" style="left:399.6px;top:96.27px;width:8.3px;height:7.529999999999999px;background:#262626;"></div>
<div class="a" style="left:408.9px;top:96.27px;width:8.3px;height:7.529999999999999px;background:#262626;"></div>
<div class="a" style="left:418.2px;top:96.27px;width:8.3px;height:7.529999999999999px;background:#262626;"></div>
<div class="a" style="left:427.5px;top:96.27px;width:8.3px;height:7.529999999999999px;background:#262626;"></div>
<svg class="a" style="left:437.5px;top:96.035px;" width="8" height="8" viewBox="0 0 8 8"><path d="M4 4 A0.9 0.9 0 0 1 5.2 3.6 A1.8 1.8 0 0 1 3.6 6 A2.7 2.7 0 0 1 1.3 3.2 A3.2 3.2 0 0 1 7.2 3.5" stroke="#b8b8b8" stroke-width="0.9" fill="none"/></svg>
<div class="a" style="left:449.7px;top:96.57px;width:53.3px;height:7.129999999999999px;background:#1f1f1f;"></div>
<div class="t" style="left:452.6px;top:96.44px;font-size:7.2px;color:#c8c8c8;transform:scaleX(0.896);">12. Main Bod</div>
<svg class="a" style="left:496.5px;top:98.535px;" width="6" height="4" viewBox="0 0 6 4"><path d="M0.5 0.5 L3 3 L5.5 0.5" stroke="#9a9a9a" stroke-width="0.9" fill="none"/></svg>
<div class="a" style="left:3px;top:105.3px;width:512.5px;height:9.93px;background:#2d2d2d;"></div>
<div class="a" style="left:3px;top:115.23px;width:512.5px;height:0.6px;background:#1d1d1d;"></div>
<svg class="a" style="left:4px;top:107.565px;" width="8" height="6" viewBox="0 0 8 6"><path d="M0.3 3 C2 0.3 6 0.3 7.7 3 C6 5.7 2 5.7 0.3 3 Z" fill="#c8c8c8"/><circle cx="4" cy="3" r="1.2" fill="#2d2d2d"/></svg>
<div class="a" style="left:21.7px;top:106.8px;width:9px;height:7.529999999999999px;background:#252525;"></div>
<div class="a" style="left:32.5px;top:106.8px;width:8px;height:7.529999999999999px;background:#252525;"></div>
<svg class="a" style="left:47.3px;top:108.565px;" width="5" height="4" viewBox="0 0 5 4"><path d="M1.5 0 L3.3 2 L1.5 4" stroke="#7a7a7a" stroke-width="0.9" fill="none"/></svg>
<div class="a" style="left:54px;top:107.6px;width:7.7px;height:7.2px;background:#c6c2e0;"></div>
<div class="t" style="left:66.7px;top:106.97px;font-size:7.2px;color:#a0a0a0;">7</div>
<svg class="a" style="left:79.5px;top:106.8px;" width="7.5" height="8" viewBox="0 0 7.5 8"><rect x="0.3" y="0.3" width="7" height="7.4" rx="1.5" fill="#8e2c16"/><path d="M1.8 6.8 V3.2 A2 2 0 0 1 5.8 3.2 V6.8 Z" fill="#e89a70"/><rect x="2.8" y="4" width="2" height="2.8" fill="#6a1606"/></svg>
<div class="t" style="left:91.3px;top:106.81px;font-size:7.5px;color:#e0e0e0;transform:scaleX(1.003);-webkit-text-stroke:0.35px #e0e0e0;">Left Arm</div>
<div class="a" style="left:248.6px;top:107.1px;width:39.8px;height:7.129999999999999px;background:#1f1f1f;"></div>
<div class="t" style="left:251px;top:106.97px;font-size:7.2px;color:#c8c8c8;transform:scaleX(0.991);">Normal</div>
<svg class="a" style="left:282px;top:109.065px;" width="6" height="4" viewBox="0 0 6 4"><path d="M0.5 0.5 L3 3 L5.5 0.5" stroke="#9a9a9a" stroke-width="0.9" fill="none"/></svg>
<div class="a" style="left:293px;top:107.1px;width:8px;height:7.129999999999999px;background:#262626;"></div>
<div class="a" style="left:305px;top:107.1px;width:38px;height:7.129999999999999px;background:#1f1f1f;"></div>
<div class="t" style="left:308.8px;top:106.97px;font-size:7.2px;color:#c8c8c8;transform:scaleX(0.976);">None</div>
<svg class="a" style="left:338px;top:109.065px;" width="6" height="4" viewBox="0 0 6 4"><path d="M0.5 0.5 L3 3 L5.5 0.5" stroke="#9a9a9a" stroke-width="0.9" fill="none"/></svg>
<svg class="a" style="left:352px;top:106.5px;" width="27" height="9" viewBox="0 0 27 9"><path d="M0.5 7 V4 A3.5 3.5 0 0 1 7.5 4 V7 Z" fill="#c8c8c8"/><path d="M0.5 6.5 H7.5" stroke="#2b2b2b" stroke-width="0.6"/><circle cx="2.5" cy="4" r="0.8" fill="#2b2b2b"/><circle cx="5.5" cy="4" r="0.8" fill="#2b2b2b"/><circle cx="14" cy="4.2" r="1.6" fill="#c8c8c8"/><path d="M14 1.2 V2 M14 6.4 V7.2 M11 4.2 H11.8 M16.2 4.2 H17 M11.9 2.1 L12.5 2.7 M15.5 5.7 L16.1 6.3 M16.1 2.1 L15.5 2.7 M12.5 5.7 L11.9 6.3" stroke="#c8c8c8" stroke-width="0.8"/><path d="M20 7.5 L26 0.5" stroke="#c8c8c8" stroke-width="1"/></svg>
<div class="a" style="left:381.0px;top:106.8px;width:8.3px;height:7.529999999999999px;background:#262626;"></div>
<div class="a" style="left:390.3px;top:106.8px;width:8.3px;height:7.529999999999999px;background:#262626;"></div>
<div class="a" style="left:399.6px;top:106.8px;width:8.3px;height:7.529999999999999px;background:#262626;"></div>
<div class="a" style="left:408.9px;top:106.8px;width:8.3px;height:7.529999999999999px;background:#262626;"></div>
<div class="a" style="left:418.2px;top:106.8px;width:8.3px;height:7.529999999999999px;background:#262626;"></div>
<div class="a" style="left:427.5px;top:106.8px;width:8.3px;height:7.529999999999999px;background:#262626;"></div>
<svg class="a" style="left:437.5px;top:106.565px;" width="8" height="8" viewBox="0 0 8 8"><path d="M4 4 A0.9 0.9 0 0 1 5.2 3.6 A1.8 1.8 0 0 1 3.6 6 A2.7 2.7 0 0 1 1.3 3.2 A3.2 3.2 0 0 1 7.2 3.5" stroke="#b8b8b8" stroke-width="0.9" fill="none"/></svg>
<div class="a" style="left:449.7px;top:107.1px;width:53.3px;height:7.129999999999999px;background:#1f1f1f;"></div>
<div class="t" style="left:452.6px;top:106.97px;font-size:7.2px;color:#c8c8c8;transform:scaleX(0.896);">12. Main Bod</div>
<svg class="a" style="left:496.5px;top:109.065px;" width="6" height="4" viewBox="0 0 6 4"><path d="M0.5 0.5 L3 3 L5.5 0.5" stroke="#9a9a9a" stroke-width="0.9" fill="none"/></svg>
</div>
<div class="a" style="left:515.5px;top:371px;width:5.5px;height:145px;background:#1c1c1c;"></div>
<div class="a" style="left:518px;top:375.3px;width:427px;height:5.5px;background:#46403d;"></div>
<div class="a" style="left:520px;top:375.6px;width:90px;height:5px;background:#7a7a7a;"></div>
<div class="a" style="left:518px;top:375.3px;width:3.8px;height:5.6px;background:#4a8fe0;border-radius:2.5px 0 0 2.5px;"></div>
<div class="a" style="left:608.5px;top:375.3px;width:3.8px;height:5.6px;background:#4a8fe0;border-radius:0 2.5px 2.5px 0;"></div>
<div class="t" style="left:517px;top:382.10px;font-size:7px;color:#a0a0a0;transform:scaleX(1.113);">:00f</div>
<div class="a" style="left:522.1px;top:390.5px;width:0.8px;height:1.6px;background:#8a8a8a;"></div>
<div class="t" style="left:553.925px;top:382.10px;font-size:7px;color:#a0a0a0;transform:scaleX(0.873);">05f</div>
<div class="a" style="left:557.775px;top:390.5px;width:0.8px;height:1.6px;background:#8a8a8a;"></div>
<div class="t" style="left:589.6px;top:382.10px;font-size:7px;color:#a0a0a0;transform:scaleX(0.873);">10f</div>
<div class="a" style="left:593.45px;top:390.5px;width:0.8px;height:1.6px;background:#8a8a8a;"></div>
<div class="t" style="left:625.275px;top:382.10px;font-size:7px;color:#a0a0a0;transform:scaleX(0.873);">15f</div>
<div class="a" style="left:629.125px;top:390.5px;width:0.8px;height:1.6px;background:#8a8a8a;"></div>
<div class="t" style="left:660.95px;top:382.10px;font-size:7px;color:#a0a0a0;transform:scaleX(0.873);">20f</div>
<div class="a" style="left:664.8000000000001px;top:390.5px;width:0.8px;height:1.6px;background:#8a8a8a;"></div>
<div class="t" style="left:692.125px;top:382.10px;font-size:7px;color:#a0a0a0;transform:scaleX(0.899);">01:00f</div>
<div class="a" style="left:700.475px;top:390.5px;width:0.8px;height:1.6px;background:#8a8a8a;"></div>
<div class="t" style="left:732.3px;top:382.10px;font-size:7px;color:#a0a0a0;transform:scaleX(0.873);">05f</div>
<div class="a" style="left:736.15px;top:390.5px;width:0.8px;height:1.6px;background:#8a8a8a;"></div>
<div class="t" style="left:767.975px;top:382.10px;font-size:7px;color:#a0a0a0;transform:scaleX(0.873);">10f</div>
<div class="a" style="left:771.825px;top:390.5px;width:0.8px;height:1.6px;background:#8a8a8a;"></div>
<div class="t" style="left:803.65px;top:382.10px;font-size:7px;color:#a0a0a0;transform:scaleX(0.873);">15f</div>
<div class="a" style="left:807.5px;top:390.5px;width:0.8px;height:1.6px;background:#8a8a8a;"></div>
<div class="t" style="left:839.325px;top:382.10px;font-size:7px;color:#a0a0a0;transform:scaleX(0.873);">20f</div>
<div class="a" style="left:843.1750000000001px;top:390.5px;width:0.8px;height:1.6px;background:#8a8a8a;"></div>
<div class="t" style="left:870.5px;top:382.10px;font-size:7px;color:#a0a0a0;transform:scaleX(0.899);">02:00f</div>
<div class="a" style="left:878.85px;top:390.5px;width:0.8px;height:1.6px;background:#8a8a8a;"></div>
<div class="t" style="left:910.675px;top:382.10px;font-size:7px;color:#a0a0a0;transform:scaleX(0.873);">05f</div>
<div class="a" style="left:914.525px;top:390.5px;width:0.8px;height:1.6px;background:#8a8a8a;"></div>
<div class="a" style="left:521px;top:394px;width:427px;height:9px;background:#727272;"></div>
<div class="a" style="left:521px;top:402.9px;width:427px;height:2px;background:#1d6e25;"></div>
<div class="a" style="left:518.8px;top:394px;width:3.8px;height:9.5px;background:#4a8fe0;border-radius:2px 0 0 2px;"></div>
<svg class="a" style="left:949.5px;top:394px;" width="9" height="22" viewBox="0 0 9 22"><path d="M0.5 0.5 H8.5 V6 L4.5 9.5 L0.5 6 Z" fill="#d8d8d8"/><path d="M4.5 13 L8 16.5 L4.5 20 L1 16.5 Z" fill="#c8c8c8"/><circle cx="4.5" cy="16.5" r="1.5" fill="#333"/></svg>
<div class="a" style="left:515px;top:405.8px;width:440px;height:109.7px;overflow:hidden">
<div class="a" style="left:6px;top:0.0px;width:433px;height:10.53px;background:#2e2e2e;"></div>
<div class="a" style="left:6px;top:0.6px;width:427px;height:9.4px;background:#787884;"></div>
<div class="a" style="left:6px;top:10.53px;width:433px;height:10.53px;background:#353535;"></div>
<div class="a" style="left:44.5px;top:10.53px;width:6px;height:10.53px;background:#474747;"></div>
<svg class="a" style="left:4.7px;top:13.129999999999999px;" width="5.6" height="6.5" viewBox="0 0 5.6 6.5"><path d="M0.2 0.2 H5.4 L3.4 3.25 L5.4 6.3 H0.2 L2.2 3.25 Z" fill="#d8d8d8"/></svg>
<svg class="a" style="left:76.05000000000003px;top:13.129999999999999px;" width="5.6" height="6.5" viewBox="0 0 5.6 6.5"><path d="M0.2 0.2 H5.4 L3.4 3.25 L5.4 6.3 H0.2 L2.2 3.25 Z" fill="#d8d8d8"/></svg>
<svg class="a" style="left:147.40000000000003px;top:13.129999999999999px;" width="5.6" height="6.5" viewBox="0 0 5.6 6.5"><path d="M0.2 0.2 H5.4 L3.4 3.25 L5.4 6.3 H0.2 L2.2 3.25 Z" fill="#d8d8d8"/></svg>
<div class="a" style="left:6px;top:21.06px;width:433px;height:10.53px;background:#2e2e2e;"></div>
<div class="a" style="left:6px;top:21.66px;width:427px;height:9.4px;background:#787884;"></div>
<div class="a" style="left:6px;top:31.589999999999996px;width:433px;height:10.53px;background:#353535;"></div>
<div class="a" style="left:44.5px;top:31.589999999999996px;width:6px;height:10.53px;background:#474747;"></div>
<svg class="a" style="left:4.7px;top:34.19px;" width="5.6" height="6.5" viewBox="0 0 5.6 6.5"><path d="M0.2 0.2 H5.4 L3.4 3.25 L5.4 6.3 H0.2 L2.2 3.25 Z" fill="#d8d8d8"/></svg>
<svg class="a" style="left:76.05000000000003px;top:34.19px;" width="5.6" height="6.5" viewBox="0 0 5.6 6.5"><path d="M0.2 0.2 H5.4 L3.4 3.25 L5.4 6.3 H0.2 L2.2 3.25 Z" fill="#d8d8d8"/></svg>
<svg class="a" style="left:147.40000000000003px;top:34.19px;" width="5.6" height="6.5" viewBox="0 0 5.6 6.5"><path d="M0.2 0.2 H5.4 L3.4 3.25 L5.4 6.3 H0.2 L2.2 3.25 Z" fill="#d8d8d8"/></svg>
<div class="a" style="left:6px;top:42.12px;width:433px;height:10.53px;background:#2e2e2e;"></div>
<div class="a" style="left:6px;top:42.72px;width:427px;height:9.4px;background:#787884;"></div>
<div class="a" style="left:6px;top:52.65px;width:433px;height:10.53px;background:#353535;"></div>
<div class="a" style="left:44.5px;top:52.65px;width:6px;height:10.53px;background:#474747;"></div>
<svg class="a" style="left:4.7px;top:55.25px;" width="5.6" height="6.5" viewBox="0 0 5.6 6.5"><path d="M0.2 0.2 H5.4 L3.4 3.25 L5.4 6.3 H0.2 L2.2 3.25 Z" fill="#d8d8d8"/></svg>
<svg class="a" style="left:76.05000000000003px;top:55.25px;" width="5.6" height="6.5" viewBox="0 0 5.6 6.5"><path d="M0.2 0.2 H5.4 L3.4 3.25 L5.4 6.3 H0.2 L2.2 3.25 Z" fill="#d8d8d8"/></svg>
<svg class="a" style="left:147.40000000000003px;top:55.25px;" width="5.6" height="6.5" viewBox="0 0 5.6 6.5"><path d="M0.2 0.2 H5.4 L3.4 3.25 L5.4 6.3 H0.2 L2.2 3.25 Z" fill="#d8d8d8"/></svg>
<div class="a" style="left:6px;top:63.17999999999999px;width:433px;height:10.53px;background:#2e2e2e;"></div>
<div class="a" style="left:6px;top:63.779999999999994px;width:427px;height:9.4px;background:#787884;"></div>
<div class="a" style="left:6px;top:73.71px;width:433px;height:10.53px;background:#353535;"></div>
<div class="a" style="left:44.5px;top:73.71px;width:6px;height:10.53px;background:#474747;"></div>
<svg class="a" style="left:4.7px;top:76.30999999999999px;" width="5.6" height="6.5" viewBox="0 0 5.6 6.5"><path d="M0.2 0.2 H5.4 L3.4 3.25 L5.4 6.3 H0.2 L2.2 3.25 Z" fill="#d8d8d8"/></svg>
<svg class="a" style="left:76.05000000000003px;top:76.30999999999999px;" width="5.6" height="6.5" viewBox="0 0 5.6 6.5"><path d="M0.2 0.2 H5.4 L3.4 3.25 L5.4 6.3 H0.2 L2.2 3.25 Z" fill="#d8d8d8"/></svg>
<svg class="a" style="left:147.40000000000003px;top:76.30999999999999px;" width="5.6" height="6.5" viewBox="0 0 5.6 6.5"><path d="M0.2 0.2 H5.4 L3.4 3.25 L5.4 6.3 H0.2 L2.2 3.25 Z" fill="#d8d8d8"/></svg>
<div class="a" style="left:6px;top:84.24px;width:433px;height:10.53px;background:#2e2e2e;"></div>
<div class="a" style="left:6px;top:84.83999999999999px;width:427px;height:9.4px;background:#787884;"></div>
<div class="a" style="left:6px;top:94.77px;width:433px;height:10.53px;background:#2e2e2e;"></div>
<div class="a" style="left:6px;top:95.36999999999999px;width:427px;height:9.4px;background:#787884;"></div>
<div class="a" style="left:6px;top:105.3px;width:433px;height:10.53px;background:#2e2e2e;"></div>
<div class="a" style="left:6px;top:105.89999999999999px;width:427px;height:9.4px;background:#787884;"></div>
</div>
<div class="a" style="left:949.5px;top:413px;width:5px;height:64px;background:#3a3a3a;border-radius:2px;"></div>
<div class="a" style="left:557px;top:390px;width:1.8px;height:125.5px;background:rgba(95,140,205,0.5);"></div>
<svg class="a" style="left:554px;top:382.5px;" width="8" height="9" viewBox="0 0 8 9"><path d="M0.5 1.5 Q0.5 0.5 1.5 0.5 H6.5 Q7.5 0.5 7.5 1.5 V5 L4 8.5 L0.5 5 Z" fill="#5a9ae8" fill-opacity="0.9"/></svg>
<div class="a" style="left:3px;top:515.5px;width:953px;height:0.8px;background:#141414;"></div>
<svg class="a" style="left:4px;top:517.5px;" width="10" height="8" viewBox="0 0 10 8"><rect x="0.5" y="0.5" width="6" height="5" fill="#3a70b0"/><rect x="3" y="2.5" width="6" height="5" fill="#2a5a9a" stroke="#232323" stroke-width="0.5"/></svg>
<svg class="a" style="left:15.5px;top:517.5px;" width="9" height="8" viewBox="0 0 9 8"><circle cx="3" cy="3" r="2.5" fill="#3a70b0"/><circle cx="5.5" cy="4.5" r="2.8" fill="#2a5a9a" stroke="#232323" stroke-width="0.5"/></svg>
<svg class="a" style="left:28px;top:517.5px;" width="8" height="8" viewBox="0 0 8 8"><rect x="1" y="0.5" width="6" height="7" fill="#b0b0b0"/><rect x="2.3" y="2" width="3.4" height="1" fill="#232323"/><rect x="2.3" y="4.5" width="3.4" height="1" fill="#232323"/></svg>
<svg class="a" style="left:520px;top:518px;" width="8" height="5" viewBox="0 0 8 5"><path d="M0.5 4.5 L4 1 L7.5 4.5 Z" fill="#c0c0c0"/></svg>
<div class="a" style="left:536px;top:521px;width:20px;height:0.8px;background:#6a6a6a;"></div>
<div class="a" style="left:556px;top:518px;width:6.5px;height:6.5px;border:1.1px solid #c8c8c8;border-radius:50%;"></div>
<svg class="a" style="left:571px;top:517.5px;" width="11" height="6" viewBox="0 0 11 6"><path d="M0.5 5.5 L3.5 1.5 L5.5 3.5 L7.5 0.8 L10.5 5.5 Z" fill="#c8c8c8"/></svg>
<div class="a" style="left:585px;top:517.5px;width:72px;height:7.5px;background:#2e2e2e;border-radius:4px;"></div>
<svg class="a" style="left:690px;top:465px" width="250" height="40" viewBox="690 465 250 40"><g fill="none" stroke-linecap="round" stroke-linejoin="round"><path d="M697.9 479.6 L704.1 494.6 L710.35 479.6 L716.6 494.6 L722.8 479.6 M725.6 479.6 L731.5 494.6 L737.4 479.6 L743.3 494.6 L749.2 479.6 M752.8 479.6 L758.8 494.6 L764.85 479.6 L770.9 494.6 L776.9 479.6 M789.1 472.9 L789.1 494.6 M789.1 486 C789.1 481.5 792 479.6 795 479.6 C798.5 479.6 800.6 482 800.6 486 L800.6 494.6 M807.9 479.6 L807.9 488.5 C807.9 492.5 810.5 494.6 813.4 494.6 C816.5 494.6 818.8 492.5 818.8 488.5 M818.8 479.6 L818.8 494.6 M824.8 479.6 L824.8 494.6 M824.8 485.5 C824.8 481.5 827.5 479.6 830.9 479.6 C834.5 479.6 837 481.5 837 485.5 L837 494.6 M844.8 472.9 L844.8 494.6 M859.3 482 C858 480.2 856.5 479.6 854.8 479.6 C852.3 479.6 850.9 481 850.9 483 C850.9 485.5 853.5 486.3 855.3 486.9 C857.8 487.7 859.2 488.8 859.2 491 C859.2 493.2 857.5 494.6 855 494.6 C852.8 494.6 851.3 493.6 850.3 492 M884.5 482 A7.2 7.2 0 1 0 884.5 492.2 M896.4 479.7 A7.4 7.4 0 1 1 896.39 479.7 Z M911.5 479.6 L911.5 494.6 M911.5 485 C911.5 481.5 913.5 479.6 915.85 479.6 C918.2 479.6 920.2 481.5 920.2 485 L920.2 494.6 M920.2 485 C920.2 481.5 922.2 479.6 924.5 479.6 C926.8 479.6 928.8 481.5 928.8 485 L928.8 494.6" stroke="#2a2a2e" stroke-opacity="0.55" stroke-width="4.1"/><path d="M697.9 479.6 L704.1 494.6 L710.35 479.6 L716.6 494.6 L722.8 479.6 M725.6 479.6 L731.5 494.6 L737.4 479.6 L743.3 494.6 L749.2 479.6 M752.8 479.6 L758.8 494.6 L764.85 479.6 L770.9 494.6 L776.9 479.6 M789.1 472.9 L789.1 494.6 M789.1 486 C789.1 481.5 792 479.6 795 479.6 C798.5 479.6 800.6 482 800.6 486 L800.6 494.6 M807.9 479.6 L807.9 488.5 C807.9 492.5 810.5 494.6 813.4 494.6 C816.5 494.6 818.8 492.5 818.8 488.5 M818.8 479.6 L818.8 494.6 M824.8 479.6 L824.8 494.6 M824.8 485.5 C824.8 481.5 827.5 479.6 830.9 479.6 C834.5 479.6 837 481.5 837 485.5 L837 494.6 M844.8 472.9 L844.8 494.6 M859.3 482 C858 480.2 856.5 479.6 854.8 479.6 C852.3 479.6 850.9 481 850.9 483 C850.9 485.5 853.5 486.3 855.3 486.9 C857.8 487.7 859.2 488.8 859.2 491 C859.2 493.2 857.5 494.6 855 494.6 C852.8 494.6 851.3 493.6 850.3 492 M884.5 482 A7.2 7.2 0 1 0 884.5 492.2 M896.4 479.7 A7.4 7.4 0 1 1 896.39 479.7 Z M911.5 479.6 L911.5 494.6 M911.5 485 C911.5 481.5 913.5 479.6 915.85 479.6 C918.2 479.6 920.2 481.5 920.2 485 L920.2 494.6 M920.2 485 C920.2 481.5 922.2 479.6 924.5 479.6 C926.8 479.6 928.8 481.5 928.8 485 L928.8 494.6" stroke="#e4e4ea" stroke-width="2.5"/></g><circle cx="781.6" cy="494.1" r="1.9" fill="#e4e4ea" stroke="#2a2a2e" stroke-opacity="0.5" stroke-width="0.8"/><circle cx="867.6" cy="494.1" r="1.9" fill="#e4e4ea" stroke="#2a2a2e" stroke-opacity="0.5" stroke-width="0.8"/></svg>
<svg class="a" style="left:681.5px;top:427px;" width="7" height="11" viewBox="0 0 7 11"><path d="M0.5 0.5 L0.5 8.5 L2.5 6.5 L4 9.8 L5.3 9.2 L3.9 6 L6.5 6 Z" fill="#fff" stroke="#222" stroke-width="0.6"/></svg>
</body></html>
